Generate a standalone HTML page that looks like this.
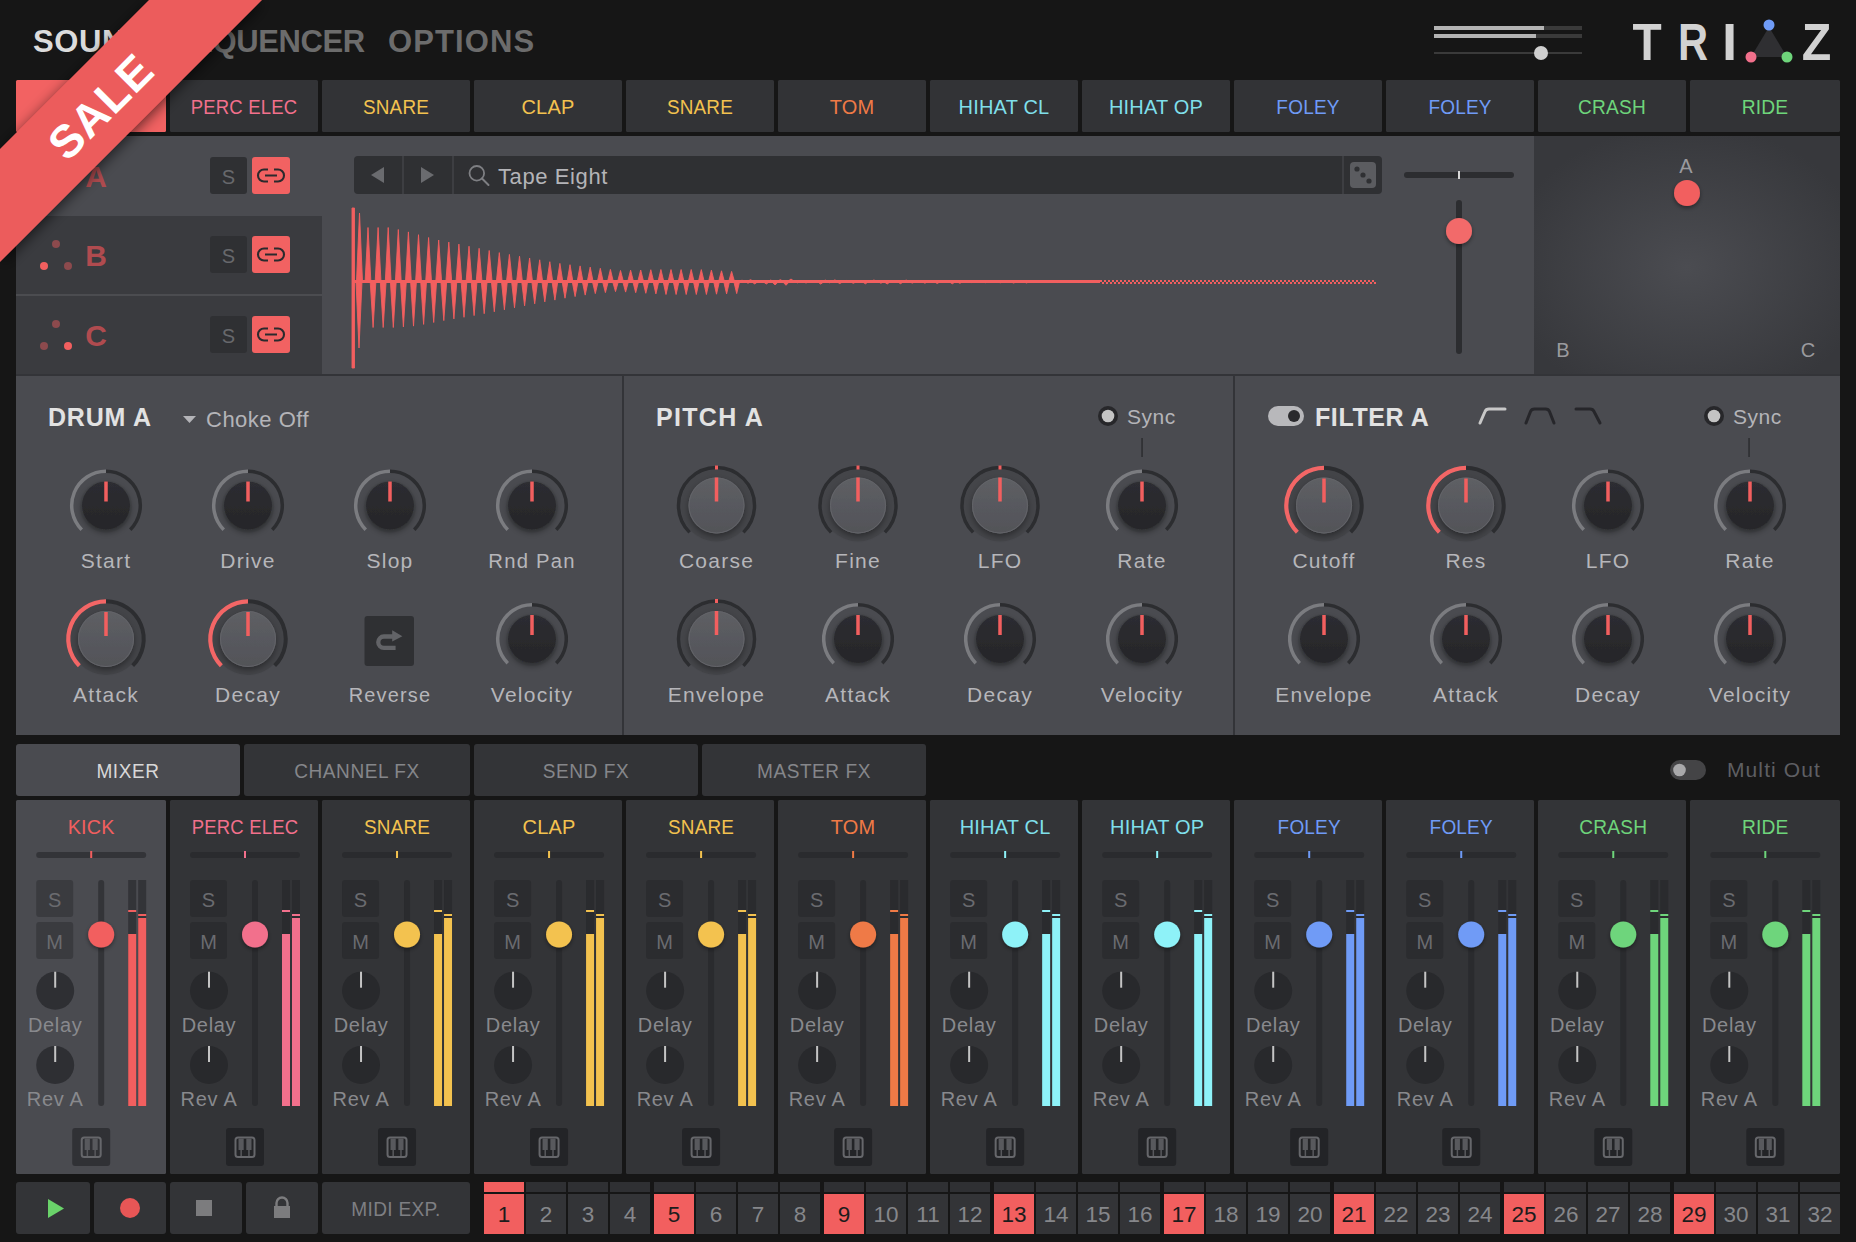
<!DOCTYPE html><html><head><meta charset="utf-8"><title>TRIAZ</title>
<style>html,body{margin:0;padding:0;background:#161616;width:1856px;height:1242px;overflow:hidden}
svg{display:block;font-family:"Liberation Sans", sans-serif}</style></head><body>
<svg width="1856" height="1242" viewBox="0 0 1856 1242">
<defs>
<filter id="sh" x="-50%" y="-50%" width="200%" height="200%"><feDropShadow dx="0" dy="3" stdDeviation="3" flood-color="#000" flood-opacity="0.38"/></filter>
<filter id="shs" x="-50%" y="-50%" width="200%" height="200%"><feDropShadow dx="0" dy="2" stdDeviation="2" flood-color="#000" flood-opacity="0.4"/></filter>
<filter id="rsh" x="-30%" y="-30%" width="160%" height="160%"><feDropShadow dx="2" dy="2" stdDeviation="7" flood-color="#000" flood-opacity="0.6"/></filter>
<radialGradient id="xyg" cx="50%" cy="55%" r="60%"><stop offset="0" stop-color="#4b4c51"/><stop offset="1" stop-color="#37383c"/></radialGradient>
<linearGradient id="knobl" x1="0" y1="0" x2="0" y2="1"><stop offset="0" stop-color="#5e5f64"/><stop offset="1" stop-color="#525358"/></linearGradient>
<linearGradient id="knobd" x1="0" y1="0" x2="0" y2="1"><stop offset="0" stop-color="#2d2d31"/><stop offset="1" stop-color="#262629"/></linearGradient>
<radialGradient id="well" cx="50%" cy="50%" r="50%"><stop offset="0.7" stop-color="#3c3d41" stop-opacity="1"/><stop offset="1" stop-color="#45464a" stop-opacity="0"/></radialGradient>
</defs>
<rect x="0" y="0" width="1856" height="1242" fill="#161616"/>

<text x="33" y="51.5" font-size="31" fill="#dcdcdc" font-weight="bold" text-anchor="start" letter-spacing="0.6" >SOUND</text>
<text x="172" y="51.5" font-size="31" fill="#6c6c6c" font-weight="bold" text-anchor="start" letter-spacing="-0.4" >SEQUENCER</text>
<text x="388" y="51.5" font-size="31" fill="#6c6c6c" font-weight="bold" text-anchor="start" letter-spacing="1.1" >OPTIONS</text>
<rect x="1434" y="26" width="148" height="4" rx="0" fill="#3a3a3a" />
<rect x="1434" y="26" width="110" height="4" rx="0" fill="#b4b4b4" />
<rect x="1434" y="34" width="148" height="4" rx="0" fill="#3a3a3a" />
<rect x="1434" y="34" width="102" height="4" rx="0" fill="#b4b4b4" />
<rect x="1434" y="52" width="148" height="2" rx="0" fill="#3a3a3a" />
<circle cx="1541" cy="53" r="7" fill="#cfcfcf" />
<g transform="translate(1647,0) scale(0.92,1) translate(-1647,0)">
<text x="1647" y="60" font-size="52" fill="#d2d2d2" font-weight="bold" text-anchor="middle" >T</text>
</g>
<g transform="translate(1678,0) scale(0.8,1) translate(-1678,0)">
<text x="1678" y="60" font-size="52" fill="#d2d2d2" font-weight="bold" text-anchor="start" >R</text>
</g>
<g transform="translate(1729.5,0) scale(1.05,1) translate(-1729.5,0)">
<text x="1729.5" y="60" font-size="52" fill="#d2d2d2" font-weight="bold" text-anchor="middle" >I</text>
</g>
<path d="M1769,27 L1751,57 L1787,57 Z" fill="#2f2f32"/>
<circle cx="1769" cy="25" r="5.5" fill="#6f9bf6" />
<circle cx="1751" cy="57" r="5.5" fill="#f2708c" />
<circle cx="1787" cy="57" r="5.5" fill="#6ed57b" />
<g transform="translate(1816.5,0) scale(0.93,1) translate(-1816.5,0)">
<text x="1816.5" y="60" font-size="52" fill="#d2d2d2" font-weight="bold" text-anchor="middle" >Z</text>
</g>
<rect x="16" y="80" width="150" height="52" rx="1.5" fill="#f26262" />
<rect x="170" y="80" width="148" height="52" rx="1.5" fill="#323336" />
<g transform="translate(244.0,0) scale(0.925,1) translate(-244.0,0)">
<text x="244.0" y="114.2" font-size="20" fill="#f2708c" font-weight="normal" text-anchor="middle" letter-spacing="0.2" >PERC ELEC</text>
</g>
<rect x="322" y="80" width="148" height="52" rx="1.5" fill="#323336" />
<g transform="translate(396.0,0) scale(0.945,1) translate(-396.0,0)">
<text x="396.0" y="114.2" font-size="20" fill="#f3c24f" font-weight="normal" text-anchor="middle" letter-spacing="0.2" >SNARE</text>
</g>
<rect x="474" y="80" width="148" height="52" rx="1.5" fill="#323336" />
<g transform="translate(548.0,0) scale(1,1) translate(-548.0,0)">
<text x="548.0" y="114.2" font-size="20" fill="#f3c24f" font-weight="normal" text-anchor="middle" letter-spacing="0.2" >CLAP</text>
</g>
<rect x="626" y="80" width="148" height="52" rx="1.5" fill="#323336" />
<g transform="translate(700.0,0) scale(0.945,1) translate(-700.0,0)">
<text x="700.0" y="114.2" font-size="20" fill="#f3c24f" font-weight="normal" text-anchor="middle" letter-spacing="0.2" >SNARE</text>
</g>
<rect x="778" y="80" width="148" height="52" rx="1.5" fill="#323336" />
<g transform="translate(852.0,0) scale(1,1) translate(-852.0,0)">
<text x="852.0" y="114.2" font-size="20" fill="#ef7a46" font-weight="normal" text-anchor="middle" letter-spacing="0.2" >TOM</text>
</g>
<rect x="930" y="80" width="148" height="52" rx="1.5" fill="#323336" />
<g transform="translate(1004.0,0) scale(1,1) translate(-1004.0,0)">
<text x="1004.0" y="114.2" font-size="20" fill="#7fdfea" font-weight="normal" text-anchor="middle" letter-spacing="0.2" >HIHAT CL</text>
</g>
<rect x="1082" y="80" width="148" height="52" rx="1.5" fill="#323336" />
<g transform="translate(1156.0,0) scale(1,1) translate(-1156.0,0)">
<text x="1156.0" y="114.2" font-size="20" fill="#7fdfea" font-weight="normal" text-anchor="middle" letter-spacing="0.2" >HIHAT OP</text>
</g>
<rect x="1234" y="80" width="148" height="52" rx="1.5" fill="#323336" />
<g transform="translate(1308.0,0) scale(0.95,1) translate(-1308.0,0)">
<text x="1308.0" y="114.2" font-size="20" fill="#6f9bf6" font-weight="normal" text-anchor="middle" letter-spacing="0.2" >FOLEY</text>
</g>
<rect x="1386" y="80" width="148" height="52" rx="1.5" fill="#323336" />
<g transform="translate(1460.0,0) scale(0.95,1) translate(-1460.0,0)">
<text x="1460.0" y="114.2" font-size="20" fill="#6f9bf6" font-weight="normal" text-anchor="middle" letter-spacing="0.2" >FOLEY</text>
</g>
<rect x="1538" y="80" width="148" height="52" rx="1.5" fill="#323336" />
<g transform="translate(1612.0,0) scale(0.955,1) translate(-1612.0,0)">
<text x="1612.0" y="114.2" font-size="20" fill="#6ed57b" font-weight="normal" text-anchor="middle" letter-spacing="0.2" >CRASH</text>
</g>
<rect x="1690" y="80" width="150" height="52" rx="1.5" fill="#323336" />
<g transform="translate(1765.0,0) scale(0.96,1) translate(-1765.0,0)">
<text x="1765.0" y="114.2" font-size="20" fill="#6ed57b" font-weight="normal" text-anchor="middle" letter-spacing="0.2" >RIDE</text>
</g>
<rect x="16" y="136" width="1824" height="239" rx="0" fill="#4a4b50" />
<rect x="16" y="216" width="306" height="78" rx="0" fill="#3a3b3f" />
<rect x="16" y="294" width="306" height="2" rx="0" fill="#4b4c50" />
<rect x="16" y="296" width="306" height="78" rx="0" fill="#3a3b3f" />
<text x="96" y="187" font-size="30" fill="#b04b4f" font-weight="bold" text-anchor="middle" >A</text>
<circle cx="56" cy="165" r="4" fill="#f25f5f" />
<circle cx="44" cy="187" r="4" fill="#8c4a4d" />
<circle cx="68" cy="187" r="4" fill="#8c4a4d" />
<rect x="210" y="157" width="37" height="37" rx="3" fill="#2f3033" />
<text x="228.5" y="183.5" font-size="20" fill="#67686c" font-weight="normal" text-anchor="middle" >S</text>
<rect x="252" y="157" width="38" height="37" rx="3" fill="#f26262" />
<path d="M268,169.5 h-4 a6,6 0 0 0 0,12 h4 M274,169.5 h4 a6,6 0 0 1 0,12 h-4 M265,175.5 h12" fill="none" stroke="#2a2a2d" stroke-width="2.1" stroke-linecap="butt"/>
<text x="96" y="266" font-size="30" fill="#b04b4f" font-weight="bold" text-anchor="middle" >B</text>
<circle cx="56" cy="244" r="4" fill="#8c4a4d" />
<circle cx="44" cy="266" r="4" fill="#f25f5f" />
<circle cx="68" cy="266" r="4" fill="#8c4a4d" />
<rect x="210" y="236" width="37" height="37" rx="3" fill="#2f3033" />
<text x="228.5" y="262.5" font-size="20" fill="#67686c" font-weight="normal" text-anchor="middle" >S</text>
<rect x="252" y="236" width="38" height="37" rx="3" fill="#f26262" />
<path d="M268,248.5 h-4 a6,6 0 0 0 0,12 h4 M274,248.5 h4 a6,6 0 0 1 0,12 h-4 M265,254.5 h12" fill="none" stroke="#2a2a2d" stroke-width="2.1" stroke-linecap="butt"/>
<text x="96" y="346" font-size="30" fill="#b04b4f" font-weight="bold" text-anchor="middle" >C</text>
<circle cx="56" cy="324" r="4" fill="#8c4a4d" />
<circle cx="44" cy="346" r="4" fill="#8c4a4d" />
<circle cx="68" cy="346" r="4" fill="#f25f5f" />
<rect x="210" y="316" width="37" height="37" rx="3" fill="#2f3033" />
<text x="228.5" y="342.5" font-size="20" fill="#67686c" font-weight="normal" text-anchor="middle" >S</text>
<rect x="252" y="316" width="38" height="37" rx="3" fill="#f26262" />
<path d="M268,328.5 h-4 a6,6 0 0 0 0,12 h4 M274,328.5 h4 a6,6 0 0 1 0,12 h-4 M265,334.5 h12" fill="none" stroke="#2a2a2d" stroke-width="2.1" stroke-linecap="butt"/>
<rect x="354" y="156" width="1028" height="38" rx="4" fill="#2f3033" />
<rect x="402" y="156" width="2" height="38" rx="0" fill="#3d3e42" />
<rect x="452" y="156" width="2" height="38" rx="0" fill="#3d3e42" />
<rect x="1342" y="156" width="2" height="38" rx="0" fill="#3d3e42" />
<path d="M371,175 L384,167 L384,183 Z" fill="#6a6b6f"/>
<path d="M434,175 L421,167 L421,183 Z" fill="#6a6b6f"/>
<circle cx="476.8" cy="173.3" r="7.3" fill="none" stroke="#7e7f83" stroke-width="1.8"/><path d="M482,178.5 L488.5,185" stroke="#7e7f83" stroke-width="2" stroke-linecap="round"/>
<text x="498" y="183.6" font-size="22" fill="#b4b4b8" font-weight="normal" text-anchor="start" letter-spacing="0.6" >Tape Eight</text>
<rect x="1350" y="162" width="26" height="26" rx="4" fill="#5b5c60" />
<circle cx="1357" cy="169" r="2.6" fill="#2f3033" />
<circle cx="1363" cy="175" r="2.6" fill="#2f3033" />
<circle cx="1369" cy="181" r="2.6" fill="#2f3033" />
<path d="M352,208 L352,368 L354.5,368 L354.5,208 Z M356.5,281.5 L359.5,213 L362.5,281.5 Z M356,281.5 L359,348 L362,281.5 Z M365.1,281.5 L368.0,227.5 L370.9,281.5 Z M370.2,281.5 L373.1,327.5 L375.9,281.5 Z M375.2,281.5 L378.1,227.5 L381.0,281.5 Z M380.3,281.5 L383.2,327.5 L386.1,281.5 Z M385.3,281.5 L388.2,227.5 L391.1,281.5 Z M390.4,281.5 L393.3,327.5 L396.2,281.5 Z M395.4,281.5 L398.3,229.5 L401.2,281.5 Z M400.5,281.5 L403.4,326.9 L406.3,281.5 Z M405.5,281.5 L408.4,231.9 L411.3,281.5 Z M410.6,281.5 L413.5,326.1 L416.4,281.5 Z M415.6,281.5 L418.5,234.7 L421.4,281.5 Z M420.7,281.5 L423.6,324.4 L426.5,281.5 Z M425.7,281.5 L428.6,237.5 L431.5,281.5 Z M430.8,281.5 L433.7,322.5 L436.6,281.5 Z M435.8,281.5 L438.7,240.0 L441.6,281.5 Z M440.9,281.5 L443.8,320.6 L446.7,281.5 Z M445.9,281.5 L448.8,242.1 L451.7,281.5 Z M451.0,281.5 L453.9,318.9 L456.8,281.5 Z M456.0,281.5 L458.9,244.1 L461.8,281.5 Z M461.1,281.5 L464.0,317.3 L466.9,281.5 Z M466.1,281.5 L469.0,246.2 L471.9,281.5 Z M471.2,281.5 L474.1,315.6 L477.0,281.5 Z M476.2,281.5 L479.1,248.3 L482.0,281.5 Z M481.3,281.5 L484.2,313.7 L487.1,281.5 Z M486.3,281.5 L489.2,250.5 L492.1,281.5 Z M491.4,281.5 L494.3,311.8 L497.2,281.5 Z M496.4,281.5 L499.3,252.6 L502.2,281.5 Z M501.5,281.5 L504.4,309.8 L507.3,281.5 Z M506.5,281.5 L509.4,254.4 L512.3,281.5 Z M511.6,281.5 L514.5,307.8 L517.4,281.5 Z M516.6,281.5 L519.5,256.2 L522.4,281.5 Z M521.7,281.5 L524.6,305.8 L527.5,281.5 Z M526.7,281.5 L529.6,258.0 L532.5,281.5 Z M531.8,281.5 L534.7,303.8 L537.6,281.5 Z M536.8,281.5 L539.7,259.8 L542.6,281.5 Z M541.9,281.5 L544.8,301.9 L547.7,281.5 Z M546.9,281.5 L549.8,261.7 L552.7,281.5 Z M552.0,281.5 L554.9,300.1 L557.8,281.5 Z M557.0,281.5 L559.9,263.4 L562.8,281.5 Z M562.1,281.5 L565.0,298.2 L567.9,281.5 Z M567.1,281.5 L570.0,264.7 L572.9,281.5 Z M572.2,281.5 L575.1,296.6 L578.0,281.5 Z M577.2,281.5 L580.1,265.9 L583.0,281.5 Z M582.3,281.5 L585.2,295.1 L588.1,281.5 Z M587.3,281.5 L590.2,267.1 L593.1,281.5 Z M592.4,281.5 L595.3,293.6 L598.2,281.5 Z M597.4,281.5 L600.3,268.3 L603.2,281.5 Z M602.5,281.5 L605.4,292.6 L608.3,281.5 Z M607.5,281.5 L610.4,269.4 L613.3,281.5 Z M612.6,281.5 L615.5,291.6 L618.4,281.5 Z M617.6,281.5 L620.5,270.5 L623.4,281.5 Z M622.7,281.5 L625.6,292.1 L628.5,281.5 Z M627.7,281.5 L630.6,270.2 L633.5,281.5 Z M632.8,281.5 L635.7,292.7 L638.6,281.5 Z M637.8,281.5 L640.7,270.0 L643.6,281.5 Z M642.9,281.5 L645.8,293.3 L648.7,281.5 Z M647.9,281.5 L650.8,269.7 L653.7,281.5 Z M653.0,281.5 L655.9,293.9 L658.8,281.5 Z M658.0,281.5 L660.9,269.5 L663.8,281.5 Z M663.1,281.5 L666.0,294.5 L668.9,281.5 Z M668.1,281.5 L671.0,269.5 L673.9,281.5 Z M673.2,281.5 L676.1,294.5 L679.0,281.5 Z M678.2,281.5 L681.1,269.5 L684.0,281.5 Z M683.3,281.5 L686.2,294.5 L689.1,281.5 Z M688.3,281.5 L691.2,269.5 L694.1,281.5 Z M693.4,281.5 L696.3,294.5 L699.2,281.5 Z M698.4,281.5 L701.3,269.6 L704.2,281.5 Z M703.5,281.5 L706.4,294.5 L709.3,281.5 Z M708.5,281.5 L711.4,270.2 L714.3,281.5 Z M713.6,281.5 L716.5,294.2 L719.4,281.5 Z M718.6,281.5 L721.5,270.8 L724.4,281.5 Z M723.7,281.5 L726.6,293.9 L729.5,281.5 Z M728.7,281.5 L731.6,271.4 L734.5,281.5 Z M733.8,281.5 L736.7,293.6 L739.6,281.5 Z M738.5,281.5 L742.0,280.2 L745.5,281.5 Z M744.5,281.5 L748.0,283.2 L751.5,281.5 Z M747.0,281.5 L750.5,279.7 L754.0,281.5 Z M751.2,281.5 L754.7,283.9 L758.2,281.5 Z M758.6,281.5 L762.1,280.9 L765.6,281.5 Z M762.8,281.5 L766.3,284.0 L769.8,281.5 Z M767.2,281.5 L770.7,280.1 L774.2,281.5 Z M771.6,281.5 L775.1,285.0 L778.6,281.5 Z M776.8,281.5 L780.3,279.7 L783.8,281.5 Z M782.5,281.5 L786.0,285.3 L789.5,281.5 Z M787.5,281.5 L791.0,279.0 L794.5,281.5 Z M794.1,281.5 L797.6,282.8 L801.1,281.5 Z M797.6,281.5 L801.1,280.8 L804.6,281.5 Z M802.5,281.5 L806.0,283.0 L809.5,281.5 Z M811.3,281.5 L814.8,280.7 L818.3,281.5 Z M817.2,281.5 L820.7,284.1 L824.2,281.5 Z M821.9,281.5 L825.4,280.1 L828.9,281.5 Z M826.1,281.5 L829.6,282.8 L833.1,281.5 Z M831.3,281.5 L834.8,279.9 L838.3,281.5 Z M836.3,281.5 L839.8,283.6 L843.3,281.5 Z M843.4,281.5 L846.9,280.4 L850.4,281.5 Z M849.8,281.5 L853.3,283.3 L856.8,281.5 Z M856.3,281.5 L859.8,280.8 L863.3,281.5 Z M861.9,281.5 L865.4,283.8 L868.9,281.5 Z M870.4,281.5 L873.9,280.0 L877.4,281.5 Z M877.4,281.5 L880.9,283.2 L884.4,281.5 Z M879.3,281.5 L882.8,280.6 L886.3,281.5 Z M883.7,281.5 L887.2,284.0 L890.7,281.5 Z M890.7,281.5 L894.2,281.2 L897.7,281.5 Z M897.0,281.5 L900.5,283.7 L904.0,281.5 Z M902.7,281.5 L906.2,280.1 L909.7,281.5 Z M908.8,281.5 L912.3,283.1 L915.8,281.5 Z M914.9,281.5 L918.4,280.5 L921.9,281.5 Z M921.4,281.5 L924.9,283.2 L928.4,281.5 Z M929.5,281.5 L933.0,280.7 L936.5,281.5 Z M933.7,281.5 L937.2,283.5 L940.7,281.5 Z M942.4,281.5 L945.9,280.6 L949.4,281.5 Z M948.8,281.5 L952.3,283.8 L955.8,281.5 Z M952.4,281.5 L955.9,280.9 L959.4,281.5 Z M956.4,281.5 L959.9,283.3 L963.4,281.5 Z M963.6,281.5 L967.1,281.2 L970.6,281.5 Z M967.8,281.5 L971.3,282.6 L974.8,281.5 Z M977.0,281.5 L980.5,281.2 L984.0,281.5 Z M982.2,281.5 L985.7,282.7 L989.2,281.5 Z M991.1,281.5 L994.6,281.3 L998.1,281.5 Z M996.7,281.5 L1000.2,282.8 L1003.7,281.5 Z M1005.3,281.5 L1008.8,280.9 L1012.3,281.5 Z M1010.1,281.5 L1013.6,283.1 L1017.1,281.5 Z M1016.2,281.5 L1019.7,281.2 L1023.2,281.5 Z M1023.0,281.5 L1026.5,283.0 L1030.0,281.5 Z M1025.2,281.5 L1028.7,281.3 L1032.2,281.5 Z M1029.9,281.5 L1033.4,282.5 L1036.9,281.5 Z M1036.6,281.5 L1040.1,281.2 L1043.6,281.5 Z M1040.6,281.5 L1044.1,282.5 L1047.6,281.5 Z M1047.6,281.5 L1051.1,281.3 L1054.6,281.5 Z M1054.4,281.5 L1057.9,282.6 L1061.4,281.5 Z M1060.4,281.5 L1063.9,281.3 L1067.4,281.5 Z M1066.4,281.5 L1069.9,282.5 L1073.4,281.5 Z M1068.8,281.5 L1072.3,281.3 L1075.8,281.5 Z M1075.4,281.5 L1078.9,282.5 L1082.4,281.5 Z M1082.4,281.5 L1085.9,281.4 L1089.4,281.5 Z M1086.7,281.5 L1090.2,282.4 L1093.7,281.5 Z " fill="#f25f5f" stroke="#f25f5f" stroke-width="0.9" stroke-linejoin="round"/>
<rect x="354" y="280" width="746" height="3" rx="0" fill="#f25f5f" />
<defs><pattern id="chk" x="0" y="280" width="4" height="4" patternUnits="userSpaceOnUse"><rect x="0" y="0" width="2" height="2" fill="#f25f5f"/><rect x="2" y="2" width="2" height="2" fill="#f25f5f"/></pattern></defs>
<rect x="1100" y="280" width="276" height="4" rx="0" fill="url(#chk)" />
<rect x="1404" y="172" width="110" height="6" rx="3" fill="#2c2d30" />
<rect x="1458" y="171" width="2" height="8" rx="0" fill="#d8d8d8" />
<rect x="1456" y="200" width="6" height="154" rx="3" fill="#2c2d30" />
<circle cx="1459" cy="231" r="13" fill="#f26b6b" filter="url(#shs)"/>
<rect x="1534" y="136" width="306" height="239" rx="0" fill="url(#xyg)" />
<text x="1686" y="173.3" font-size="20" fill="#9a9a9e" font-weight="normal" text-anchor="middle" >A</text>
<text x="1563" y="357.4" font-size="20" fill="#9a9a9e" font-weight="normal" text-anchor="middle" >B</text>
<text x="1808" y="357.4" font-size="20" fill="#9a9a9e" font-weight="normal" text-anchor="middle" >C</text>
<circle cx="1687" cy="193" r="13" fill="#f25f5f" filter="url(#shs)"/>
<rect x="16" y="374" width="1824" height="2" rx="0" fill="#333438" />
<rect x="16" y="376" width="1824" height="359" rx="0" fill="#4a4b50" />
<rect x="622" y="376" width="2" height="359" rx="0" fill="#333438" />
<rect x="1233" y="376" width="2" height="359" rx="0" fill="#333438" />
<text x="48" y="426" font-size="25" fill="#e2e2e2" font-weight="bold" text-anchor="start" letter-spacing="0.8" >DRUM A</text>
<path d="M183,416 L196,416 L189.5,423 Z" fill="#b4b4b8"/>
<text x="206" y="427" font-size="22" fill="#b4b4b8" font-weight="normal" text-anchor="start" letter-spacing="0.5" >Choke Off</text>
<text x="656" y="426" font-size="25" fill="#e2e2e2" font-weight="bold" text-anchor="start" letter-spacing="1.3" >PITCH A</text>
<text x="1315" y="426" font-size="25" fill="#e2e2e2" font-weight="bold" text-anchor="start" letter-spacing="0.6" >FILTER A</text>
<circle cx="1108" cy="416" r="10" fill="#27272a" />
<circle cx="1108" cy="416" r="6.3" fill="#c4c4c4" />
<text x="1127" y="424" font-size="21" fill="#b4b4b8" font-weight="normal" text-anchor="start" letter-spacing="0.5" >Sync</text>
<circle cx="1714" cy="416" r="10" fill="#27272a" />
<circle cx="1714" cy="416" r="6.3" fill="#c4c4c4" />
<text x="1733" y="424" font-size="21" fill="#b4b4b8" font-weight="normal" text-anchor="start" letter-spacing="0.5" >Sync</text>
<rect x="1141.3" y="438" width="1.5" height="19" rx="0" fill="#2c2d30" />
<rect x="1748.3" y="438" width="1.5" height="19" rx="0" fill="#2c2d30" />
<rect x="1268" y="406" width="36" height="20" rx="10" fill="#b8b8bb" />
<circle cx="1294" cy="416" r="6" fill="#2a2a2d" />
<path d="M1480,423 L1485,411.5 Q1486,409 1489,409 L1505,409" fill="none" stroke="#c8c8c8" stroke-width="3" stroke-linecap="round" stroke-linejoin="round"/>
<path d="M1526,423 L1530.5,411.5 Q1531.5,409 1534.5,409 L1545.5,409 Q1548.5,409 1549.5,411.5 L1554,423" fill="none" stroke="#26262a" stroke-width="3" stroke-linecap="round" stroke-linejoin="round"/>
<path d="M1576,409 L1590,409 Q1593,409 1594,411.5 L1600,423" fill="none" stroke="#26262a" stroke-width="3" stroke-linecap="round" stroke-linejoin="round"/>
<path d="M81.75,529.75 A34.3,34.3 0 0 1 106.00,471.20" fill="none" stroke="#7b7c80" stroke-width="3.5" stroke-linecap="butt"/>
<path d="M106.00,471.20 A34.3,34.3 0 0 1 130.25,529.75" fill="none" stroke="#2c2d30" stroke-width="3.5" stroke-linecap="butt"/>
<circle cx="106" cy="506.5" r="26" fill="#45464a" opacity="0.6"/>
<circle cx="106" cy="505.5" r="24" fill="url(#knobd)" filter="url(#sh)"/>
<rect x="104.25" y="481.5" width="3.5" height="20" rx="0" fill="#f25f5f" />
<text x="106" y="568.1" font-size="21" fill="#b6b6ba" font-weight="normal" text-anchor="middle" letter-spacing="1.25" >Start</text>
<path d="M223.75,529.75 A34.3,34.3 0 0 1 248.00,471.20" fill="none" stroke="#7b7c80" stroke-width="3.5" stroke-linecap="butt"/>
<path d="M248.00,471.20 A34.3,34.3 0 0 1 272.25,529.75" fill="none" stroke="#2c2d30" stroke-width="3.5" stroke-linecap="butt"/>
<circle cx="248" cy="506.5" r="26" fill="#45464a" opacity="0.6"/>
<circle cx="248" cy="505.5" r="24" fill="url(#knobd)" filter="url(#sh)"/>
<rect x="246.25" y="481.5" width="3.5" height="20" rx="0" fill="#f25f5f" />
<text x="248" y="568.1" font-size="21" fill="#b6b6ba" font-weight="normal" text-anchor="middle" letter-spacing="1.25" >Drive</text>
<path d="M365.75,529.75 A34.3,34.3 0 0 1 390.00,471.20" fill="none" stroke="#7b7c80" stroke-width="3.5" stroke-linecap="butt"/>
<path d="M390.00,471.20 A34.3,34.3 0 0 1 414.25,529.75" fill="none" stroke="#2c2d30" stroke-width="3.5" stroke-linecap="butt"/>
<circle cx="390" cy="506.5" r="26" fill="#45464a" opacity="0.6"/>
<circle cx="390" cy="505.5" r="24" fill="url(#knobd)" filter="url(#sh)"/>
<rect x="388.25" y="481.5" width="3.5" height="20" rx="0" fill="#f25f5f" />
<text x="390" y="568.1" font-size="21" fill="#b6b6ba" font-weight="normal" text-anchor="middle" letter-spacing="1.25" >Slop</text>
<path d="M507.75,529.75 A34.3,34.3 0 0 1 532.00,471.20" fill="none" stroke="#7b7c80" stroke-width="3.5" stroke-linecap="butt"/>
<path d="M532.00,471.20 A34.3,34.3 0 0 1 556.25,529.75" fill="none" stroke="#2c2d30" stroke-width="3.5" stroke-linecap="butt"/>
<circle cx="532" cy="506.5" r="26" fill="#45464a" opacity="0.6"/>
<circle cx="532" cy="505.5" r="24" fill="url(#knobd)" filter="url(#sh)"/>
<rect x="530.25" y="481.5" width="3.5" height="20" rx="0" fill="#f25f5f" />
<g transform="translate(532,0) scale(0.965,1) translate(-532,0)">
<text x="532" y="568.1" font-size="21" fill="#b6b6ba" font-weight="normal" text-anchor="middle" letter-spacing="1.25" >Rnd Pan</text>
</g>
<circle cx="106" cy="639" r="36" fill="#434448" />
<path d="M79.34,665.66 A37.7,37.7 0 0 1 106.00,601.30" fill="none" stroke="#f36666" stroke-width="4.2" stroke-linecap="butt"/>
<path d="M106.00,601.30 A37.7,37.7 0 0 1 132.66,665.66" fill="none" stroke="#2c2d30" stroke-width="4" stroke-linecap="butt"/>
<circle cx="106" cy="639" r="28" fill="url(#knobl)" filter="url(#sh)"/>
<circle cx="106" cy="639" r="27.5" fill="none" stroke="#636469" stroke-width="1"/>
<rect x="104.25" y="612" width="3.5" height="24" rx="0" fill="#f25f5f" />
<text x="106" y="701.6" font-size="21" fill="#b6b6ba" font-weight="normal" text-anchor="middle" letter-spacing="1.25" >Attack</text>
<circle cx="248" cy="639" r="36" fill="#434448" />
<path d="M221.34,665.66 A37.7,37.7 0 0 1 248.00,601.30" fill="none" stroke="#f36666" stroke-width="4.2" stroke-linecap="butt"/>
<path d="M248.00,601.30 A37.7,37.7 0 0 1 274.66,665.66" fill="none" stroke="#2c2d30" stroke-width="4" stroke-linecap="butt"/>
<circle cx="248" cy="639" r="28" fill="url(#knobl)" filter="url(#sh)"/>
<circle cx="248" cy="639" r="27.5" fill="none" stroke="#636469" stroke-width="1"/>
<rect x="246.25" y="612" width="3.5" height="24" rx="0" fill="#f25f5f" />
<text x="248" y="701.6" font-size="21" fill="#b6b6ba" font-weight="normal" text-anchor="middle" letter-spacing="1.25" >Decay</text>
<rect x="364.5" y="616" width="49.5" height="50" rx="3" fill="#2f3033" />
<path d="M393,636.5 H383.9 a5.65,5.65 0 0 0 0,11.3 H395.6" fill="none" stroke="#626367" stroke-width="4.3"/><path d="M392.2,630.2 L402.4,636.2 L392.2,641.6 Z" fill="#626367"/>
<g transform="translate(390,0) scale(0.95,1) translate(-390,0)">
<text x="390" y="701.6" font-size="21" fill="#b6b6ba" font-weight="normal" text-anchor="middle" letter-spacing="1.25" >Reverse</text>
</g>
<path d="M507.75,663.25 A34.3,34.3 0 0 1 532.00,604.70" fill="none" stroke="#7b7c80" stroke-width="3.5" stroke-linecap="butt"/>
<path d="M532.00,604.70 A34.3,34.3 0 0 1 556.25,663.25" fill="none" stroke="#2c2d30" stroke-width="3.5" stroke-linecap="butt"/>
<circle cx="532" cy="640" r="26" fill="#45464a" opacity="0.6"/>
<circle cx="532" cy="639" r="24" fill="url(#knobd)" filter="url(#sh)"/>
<rect x="530.25" y="615" width="3.5" height="20" rx="0" fill="#f25f5f" />
<text x="532" y="701.6" font-size="21" fill="#b6b6ba" font-weight="normal" text-anchor="middle" letter-spacing="1.25" >Velocity</text>
<circle cx="716.5" cy="505.5" r="36" fill="#444549" />
<path d="M689.63,532.37 A38,38 0 1 1 743.37,532.37" fill="none" stroke="#2c2d30" stroke-width="3.5" stroke-linecap="butt"/>
<rect x="715.0" y="465.5" width="3" height="4" rx="0" fill="#f25f5f" />
<circle cx="716.5" cy="505.5" r="28" fill="url(#knobl)" filter="url(#sh)"/>
<circle cx="716.5" cy="505.5" r="27.5" fill="none" stroke="#636469" stroke-width="1"/>
<rect x="714.75" y="477.5" width="3.5" height="24" rx="0" fill="#f25f5f" />
<text x="716.5" y="568.1" font-size="21" fill="#b6b6ba" font-weight="normal" text-anchor="middle" letter-spacing="1.25" >Coarse</text>
<circle cx="858" cy="505.5" r="36" fill="#444549" />
<path d="M831.13,532.37 A38,38 0 1 1 884.87,532.37" fill="none" stroke="#2c2d30" stroke-width="3.5" stroke-linecap="butt"/>
<rect x="856.5" y="465.5" width="3" height="4" rx="0" fill="#f25f5f" />
<circle cx="858" cy="505.5" r="28" fill="url(#knobl)" filter="url(#sh)"/>
<circle cx="858" cy="505.5" r="27.5" fill="none" stroke="#636469" stroke-width="1"/>
<rect x="856.25" y="477.5" width="3.5" height="24" rx="0" fill="#f25f5f" />
<text x="858" y="568.1" font-size="21" fill="#b6b6ba" font-weight="normal" text-anchor="middle" letter-spacing="1.25" >Fine</text>
<circle cx="1000" cy="505.5" r="36" fill="#444549" />
<path d="M973.13,532.37 A38,38 0 1 1 1026.87,532.37" fill="none" stroke="#2c2d30" stroke-width="3.5" stroke-linecap="butt"/>
<rect x="998.5" y="465.5" width="3" height="4" rx="0" fill="#f25f5f" />
<circle cx="1000" cy="505.5" r="28" fill="url(#knobl)" filter="url(#sh)"/>
<circle cx="1000" cy="505.5" r="27.5" fill="none" stroke="#636469" stroke-width="1"/>
<rect x="998.25" y="477.5" width="3.5" height="24" rx="0" fill="#f25f5f" />
<text x="1000" y="568.1" font-size="21" fill="#b6b6ba" font-weight="normal" text-anchor="middle" letter-spacing="1.25" >LFO</text>
<path d="M1117.75,529.75 A34.3,34.3 0 0 1 1142.00,471.20" fill="none" stroke="#7b7c80" stroke-width="3.5" stroke-linecap="butt"/>
<path d="M1142.00,471.20 A34.3,34.3 0 0 1 1166.25,529.75" fill="none" stroke="#2c2d30" stroke-width="3.5" stroke-linecap="butt"/>
<circle cx="1142" cy="506.5" r="26" fill="#45464a" opacity="0.6"/>
<circle cx="1142" cy="505.5" r="24" fill="url(#knobd)" filter="url(#sh)"/>
<rect x="1140.25" y="481.5" width="3.5" height="20" rx="0" fill="#f25f5f" />
<text x="1142" y="568.1" font-size="21" fill="#b6b6ba" font-weight="normal" text-anchor="middle" letter-spacing="1.25" >Rate</text>
<circle cx="716.5" cy="639" r="36" fill="#444549" />
<path d="M689.63,665.87 A38,38 0 1 1 743.37,665.87" fill="none" stroke="#2c2d30" stroke-width="3.5" stroke-linecap="butt"/>
<rect x="715.0" y="599" width="3" height="4" rx="0" fill="#f25f5f" />
<circle cx="716.5" cy="639" r="28" fill="url(#knobl)" filter="url(#sh)"/>
<circle cx="716.5" cy="639" r="27.5" fill="none" stroke="#636469" stroke-width="1"/>
<rect x="714.75" y="611" width="3.5" height="24" rx="0" fill="#f25f5f" />
<text x="716.5" y="701.6" font-size="21" fill="#b6b6ba" font-weight="normal" text-anchor="middle" letter-spacing="1.25" >Envelope</text>
<path d="M833.75,663.25 A34.3,34.3 0 0 1 858.00,604.70" fill="none" stroke="#7b7c80" stroke-width="3.5" stroke-linecap="butt"/>
<path d="M858.00,604.70 A34.3,34.3 0 0 1 882.25,663.25" fill="none" stroke="#2c2d30" stroke-width="3.5" stroke-linecap="butt"/>
<circle cx="858" cy="640" r="26" fill="#45464a" opacity="0.6"/>
<circle cx="858" cy="639" r="24" fill="url(#knobd)" filter="url(#sh)"/>
<rect x="856.25" y="615" width="3.5" height="20" rx="0" fill="#f25f5f" />
<text x="858" y="701.6" font-size="21" fill="#b6b6ba" font-weight="normal" text-anchor="middle" letter-spacing="1.25" >Attack</text>
<path d="M975.75,663.25 A34.3,34.3 0 0 1 1000.00,604.70" fill="none" stroke="#7b7c80" stroke-width="3.5" stroke-linecap="butt"/>
<path d="M1000.00,604.70 A34.3,34.3 0 0 1 1024.25,663.25" fill="none" stroke="#2c2d30" stroke-width="3.5" stroke-linecap="butt"/>
<circle cx="1000" cy="640" r="26" fill="#45464a" opacity="0.6"/>
<circle cx="1000" cy="639" r="24" fill="url(#knobd)" filter="url(#sh)"/>
<rect x="998.25" y="615" width="3.5" height="20" rx="0" fill="#f25f5f" />
<text x="1000" y="701.6" font-size="21" fill="#b6b6ba" font-weight="normal" text-anchor="middle" letter-spacing="1.25" >Decay</text>
<path d="M1117.75,663.25 A34.3,34.3 0 0 1 1142.00,604.70" fill="none" stroke="#7b7c80" stroke-width="3.5" stroke-linecap="butt"/>
<path d="M1142.00,604.70 A34.3,34.3 0 0 1 1166.25,663.25" fill="none" stroke="#2c2d30" stroke-width="3.5" stroke-linecap="butt"/>
<circle cx="1142" cy="640" r="26" fill="#45464a" opacity="0.6"/>
<circle cx="1142" cy="639" r="24" fill="url(#knobd)" filter="url(#sh)"/>
<rect x="1140.25" y="615" width="3.5" height="20" rx="0" fill="#f25f5f" />
<text x="1142" y="701.6" font-size="21" fill="#b6b6ba" font-weight="normal" text-anchor="middle" letter-spacing="1.25" >Velocity</text>
<circle cx="1324" cy="505.5" r="36" fill="#434448" />
<path d="M1297.34,532.16 A37.7,37.7 0 0 1 1324.00,467.80" fill="none" stroke="#f36666" stroke-width="4.2" stroke-linecap="butt"/>
<path d="M1324.00,467.80 A37.7,37.7 0 0 1 1350.66,532.16" fill="none" stroke="#2c2d30" stroke-width="4" stroke-linecap="butt"/>
<circle cx="1324" cy="505.5" r="28" fill="url(#knobl)" filter="url(#sh)"/>
<circle cx="1324" cy="505.5" r="27.5" fill="none" stroke="#636469" stroke-width="1"/>
<rect x="1322.25" y="478.5" width="3.5" height="24" rx="0" fill="#f25f5f" />
<text x="1324" y="568.1" font-size="21" fill="#b6b6ba" font-weight="normal" text-anchor="middle" letter-spacing="1.25" >Cutoff</text>
<circle cx="1466" cy="505.5" r="36" fill="#434448" />
<path d="M1439.34,532.16 A37.7,37.7 0 0 1 1466.00,467.80" fill="none" stroke="#f36666" stroke-width="4.2" stroke-linecap="butt"/>
<path d="M1466.00,467.80 A37.7,37.7 0 0 1 1492.66,532.16" fill="none" stroke="#2c2d30" stroke-width="4" stroke-linecap="butt"/>
<circle cx="1466" cy="505.5" r="28" fill="url(#knobl)" filter="url(#sh)"/>
<circle cx="1466" cy="505.5" r="27.5" fill="none" stroke="#636469" stroke-width="1"/>
<rect x="1464.25" y="478.5" width="3.5" height="24" rx="0" fill="#f25f5f" />
<text x="1466" y="568.1" font-size="21" fill="#b6b6ba" font-weight="normal" text-anchor="middle" letter-spacing="1.25" >Res</text>
<path d="M1583.75,529.75 A34.3,34.3 0 0 1 1608.00,471.20" fill="none" stroke="#7b7c80" stroke-width="3.5" stroke-linecap="butt"/>
<path d="M1608.00,471.20 A34.3,34.3 0 0 1 1632.25,529.75" fill="none" stroke="#2c2d30" stroke-width="3.5" stroke-linecap="butt"/>
<circle cx="1608" cy="506.5" r="26" fill="#45464a" opacity="0.6"/>
<circle cx="1608" cy="505.5" r="24" fill="url(#knobd)" filter="url(#sh)"/>
<rect x="1606.25" y="481.5" width="3.5" height="20" rx="0" fill="#f25f5f" />
<text x="1608" y="568.1" font-size="21" fill="#b6b6ba" font-weight="normal" text-anchor="middle" letter-spacing="1.25" >LFO</text>
<path d="M1725.75,529.75 A34.3,34.3 0 0 1 1750.00,471.20" fill="none" stroke="#7b7c80" stroke-width="3.5" stroke-linecap="butt"/>
<path d="M1750.00,471.20 A34.3,34.3 0 0 1 1774.25,529.75" fill="none" stroke="#2c2d30" stroke-width="3.5" stroke-linecap="butt"/>
<circle cx="1750" cy="506.5" r="26" fill="#45464a" opacity="0.6"/>
<circle cx="1750" cy="505.5" r="24" fill="url(#knobd)" filter="url(#sh)"/>
<rect x="1748.25" y="481.5" width="3.5" height="20" rx="0" fill="#f25f5f" />
<text x="1750" y="568.1" font-size="21" fill="#b6b6ba" font-weight="normal" text-anchor="middle" letter-spacing="1.25" >Rate</text>
<path d="M1299.75,663.25 A34.3,34.3 0 0 1 1324.00,604.70" fill="none" stroke="#7b7c80" stroke-width="3.5" stroke-linecap="butt"/>
<path d="M1324.00,604.70 A34.3,34.3 0 0 1 1348.25,663.25" fill="none" stroke="#2c2d30" stroke-width="3.5" stroke-linecap="butt"/>
<circle cx="1324" cy="640" r="26" fill="#45464a" opacity="0.6"/>
<circle cx="1324" cy="639" r="24" fill="url(#knobd)" filter="url(#sh)"/>
<rect x="1322.25" y="615" width="3.5" height="20" rx="0" fill="#f25f5f" />
<text x="1324" y="701.6" font-size="21" fill="#b6b6ba" font-weight="normal" text-anchor="middle" letter-spacing="1.25" >Envelope</text>
<path d="M1441.75,663.25 A34.3,34.3 0 0 1 1466.00,604.70" fill="none" stroke="#7b7c80" stroke-width="3.5" stroke-linecap="butt"/>
<path d="M1466.00,604.70 A34.3,34.3 0 0 1 1490.25,663.25" fill="none" stroke="#2c2d30" stroke-width="3.5" stroke-linecap="butt"/>
<circle cx="1466" cy="640" r="26" fill="#45464a" opacity="0.6"/>
<circle cx="1466" cy="639" r="24" fill="url(#knobd)" filter="url(#sh)"/>
<rect x="1464.25" y="615" width="3.5" height="20" rx="0" fill="#f25f5f" />
<text x="1466" y="701.6" font-size="21" fill="#b6b6ba" font-weight="normal" text-anchor="middle" letter-spacing="1.25" >Attack</text>
<path d="M1583.75,663.25 A34.3,34.3 0 0 1 1608.00,604.70" fill="none" stroke="#7b7c80" stroke-width="3.5" stroke-linecap="butt"/>
<path d="M1608.00,604.70 A34.3,34.3 0 0 1 1632.25,663.25" fill="none" stroke="#2c2d30" stroke-width="3.5" stroke-linecap="butt"/>
<circle cx="1608" cy="640" r="26" fill="#45464a" opacity="0.6"/>
<circle cx="1608" cy="639" r="24" fill="url(#knobd)" filter="url(#sh)"/>
<rect x="1606.25" y="615" width="3.5" height="20" rx="0" fill="#f25f5f" />
<text x="1608" y="701.6" font-size="21" fill="#b6b6ba" font-weight="normal" text-anchor="middle" letter-spacing="1.25" >Decay</text>
<path d="M1725.75,663.25 A34.3,34.3 0 0 1 1750.00,604.70" fill="none" stroke="#7b7c80" stroke-width="3.5" stroke-linecap="butt"/>
<path d="M1750.00,604.70 A34.3,34.3 0 0 1 1774.25,663.25" fill="none" stroke="#2c2d30" stroke-width="3.5" stroke-linecap="butt"/>
<circle cx="1750" cy="640" r="26" fill="#45464a" opacity="0.6"/>
<circle cx="1750" cy="639" r="24" fill="url(#knobd)" filter="url(#sh)"/>
<rect x="1748.25" y="615" width="3.5" height="20" rx="0" fill="#f25f5f" />
<text x="1750" y="701.6" font-size="21" fill="#b6b6ba" font-weight="normal" text-anchor="middle" letter-spacing="1.25" >Velocity</text>
<rect x="16" y="744" width="224" height="52" rx="3" fill="#4a4b50" />
<g transform="translate(128.0,0) scale(0.925,1) translate(-128.0,0)">
<text x="128.0" y="778.5" font-size="20.6" fill="#d8d8d8" font-weight="normal" text-anchor="middle" letter-spacing="0.6" >MIXER</text>
</g>
<rect x="244" y="744" width="226" height="52" rx="3" fill="#333437" />
<g transform="translate(357.0,0) scale(0.925,1) translate(-357.0,0)">
<text x="357.0" y="778.5" font-size="20.6" fill="#85868a" font-weight="normal" text-anchor="middle" letter-spacing="0.6" >CHANNEL FX</text>
</g>
<rect x="474" y="744" width="224" height="52" rx="3" fill="#333437" />
<g transform="translate(586.0,0) scale(0.925,1) translate(-586.0,0)">
<text x="586.0" y="778.5" font-size="20.6" fill="#85868a" font-weight="normal" text-anchor="middle" letter-spacing="0.6" >SEND FX</text>
</g>
<rect x="702" y="744" width="224" height="52" rx="3" fill="#333437" />
<g transform="translate(814.0,0) scale(0.925,1) translate(-814.0,0)">
<text x="814.0" y="778.5" font-size="20.6" fill="#85868a" font-weight="normal" text-anchor="middle" letter-spacing="0.6" >MASTER FX</text>
</g>
<rect x="1670" y="760" width="36" height="20" rx="10" fill="#444446" />
<circle cx="1679.5" cy="770" r="6.3" fill="#a8a8aa" />
<text x="1727" y="777" font-size="21" fill="#5e5f63" font-weight="normal" text-anchor="start" letter-spacing="1.1" >Multi Out</text>
<rect x="16" y="800" width="150" height="374" rx="1.5" fill="#4a4b50" />
<g transform="translate(91.2,0) scale(0.99,1) translate(-91.2,0)">
<text x="91.2" y="834.2" font-size="20" fill="#f25f5f" font-weight="normal" text-anchor="middle" letter-spacing="0.2" >KICK</text>
</g>
<rect x="36.2" y="852" width="110" height="6" rx="3" fill="#333438" />
<rect x="90.2" y="851" width="2" height="7" rx="0" fill="#f25f5f" />
<rect x="36.2" y="880" width="37" height="37" rx="3" fill="#3a3b3f" />
<rect x="36.2" y="922" width="37" height="37" rx="3" fill="#3a3b3f" />
<text x="54.7" y="906.5" font-size="20" fill="#6a6b6f" font-weight="normal" text-anchor="middle" >S</text>
<text x="54.7" y="948.5" font-size="20" fill="#6a6b6f" font-weight="normal" text-anchor="middle" >M</text>
<rect x="98.2" y="880" width="6" height="226" rx="3" fill="#333438" />
<circle cx="101.2" cy="934.5" r="13" fill="#f25f5f" filter="url(#shs)"/>
<rect x="128.2" y="880" width="8" height="226" rx="0" fill="#333438" />
<rect x="138.2" y="880" width="8" height="226" rx="0" fill="#333438" />
<rect x="128.2" y="910" width="8" height="2" rx="0" fill="#f25f5f" />
<rect x="128.2" y="934" width="8" height="172" rx="0" fill="#f25f5f" />
<rect x="138.2" y="914" width="8" height="2" rx="0" fill="#f25f5f" />
<rect x="138.2" y="918" width="8" height="188" rx="0" fill="#f25f5f" />
<circle cx="55.2" cy="990.7" r="19" fill="#2e2f33" />
<rect x="54.2" y="971.7" width="2" height="16" rx="0" fill="#c4c4c4" />
<text x="55.2" y="1032" font-size="20" fill="#88898d" font-weight="normal" text-anchor="middle" letter-spacing="0.7" >Delay</text>
<circle cx="55.2" cy="1065" r="19" fill="#2e2f33" />
<rect x="54.2" y="1046" width="2" height="16" rx="0" fill="#c4c4c4" />
<text x="55.2" y="1106" font-size="20" fill="#88898d" font-weight="normal" text-anchor="middle" letter-spacing="0.7" >Rev A</text>
<rect x="72.2" y="1128" width="38" height="38" rx="3" fill="#303135" />
<rect x="81.7" y="1137.5" width="19" height="19.5" rx="2.5" fill="none" stroke="#66676b" stroke-width="2"/>
<rect x="84.7" y="1138.5" width="5.2" height="11.5" rx="0" fill="#58595d" />
<rect x="92.5" y="1138.5" width="5.2" height="11.5" rx="0" fill="#58595d" />
<rect x="86.60000000000001" y="1150.0" width="1.5" height="6" rx="0" fill="#58595d" />
<rect x="94.4" y="1150.0" width="1.5" height="6" rx="0" fill="#58595d" />
<rect x="170" y="800" width="148" height="374" rx="1.5" fill="#333437" />
<g transform="translate(245.0,0) scale(0.925,1) translate(-245.0,0)">
<text x="245.0" y="834.2" font-size="20" fill="#f2708c" font-weight="normal" text-anchor="middle" letter-spacing="0.2" >PERC ELEC</text>
</g>
<rect x="190.0" y="852" width="110" height="6" rx="3" fill="#2a2b2e" />
<rect x="244.0" y="851" width="2" height="7" rx="0" fill="#f2708c" />
<rect x="190.0" y="880" width="37" height="37" rx="3" fill="#2b2c2f" />
<rect x="190.0" y="922" width="37" height="37" rx="3" fill="#2b2c2f" />
<text x="208.5" y="906.5" font-size="20" fill="#6a6b6f" font-weight="normal" text-anchor="middle" >S</text>
<text x="208.5" y="948.5" font-size="20" fill="#6a6b6f" font-weight="normal" text-anchor="middle" >M</text>
<rect x="252.0" y="880" width="6" height="226" rx="3" fill="#2a2b2e" />
<circle cx="255.0" cy="934.5" r="13" fill="#f2708c" filter="url(#shs)"/>
<rect x="282.0" y="880" width="8" height="226" rx="0" fill="#2a2b2e" />
<rect x="292.0" y="880" width="8" height="226" rx="0" fill="#2a2b2e" />
<rect x="282.0" y="910" width="8" height="2" rx="0" fill="#f2708c" />
<rect x="282.0" y="934" width="8" height="172" rx="0" fill="#f2708c" />
<rect x="292.0" y="914" width="8" height="2" rx="0" fill="#f2708c" />
<rect x="292.0" y="918" width="8" height="188" rx="0" fill="#f2708c" />
<circle cx="209.0" cy="990.7" r="19" fill="#28292c" />
<rect x="208.0" y="971.7" width="2" height="16" rx="0" fill="#c4c4c4" />
<text x="209.0" y="1032" font-size="20" fill="#88898d" font-weight="normal" text-anchor="middle" letter-spacing="0.7" >Delay</text>
<circle cx="209.0" cy="1065" r="19" fill="#28292c" />
<rect x="208.0" y="1046" width="2" height="16" rx="0" fill="#c4c4c4" />
<text x="209.0" y="1106" font-size="20" fill="#88898d" font-weight="normal" text-anchor="middle" letter-spacing="0.7" >Rev A</text>
<rect x="226.0" y="1128" width="38" height="38" rx="3" fill="#232427" />
<rect x="235.5" y="1137.5" width="19" height="19.5" rx="2.5" fill="none" stroke="#66676b" stroke-width="2"/>
<rect x="238.5" y="1138.5" width="5.2" height="11.5" rx="0" fill="#58595d" />
<rect x="246.3" y="1138.5" width="5.2" height="11.5" rx="0" fill="#58595d" />
<rect x="240.4" y="1150.0" width="1.5" height="6" rx="0" fill="#58595d" />
<rect x="248.2" y="1150.0" width="1.5" height="6" rx="0" fill="#58595d" />
<rect x="322" y="800" width="148" height="374" rx="1.5" fill="#333437" />
<g transform="translate(397.03,0) scale(0.945,1) translate(-397.03,0)">
<text x="397.03" y="834.2" font-size="20" fill="#f3c24f" font-weight="normal" text-anchor="middle" letter-spacing="0.2" >SNARE</text>
</g>
<rect x="342.03" y="852" width="110" height="6" rx="3" fill="#2a2b2e" />
<rect x="396.03" y="851" width="2" height="7" rx="0" fill="#f3c24f" />
<rect x="342.03" y="880" width="37" height="37" rx="3" fill="#2b2c2f" />
<rect x="342.03" y="922" width="37" height="37" rx="3" fill="#2b2c2f" />
<text x="360.53" y="906.5" font-size="20" fill="#6a6b6f" font-weight="normal" text-anchor="middle" >S</text>
<text x="360.53" y="948.5" font-size="20" fill="#6a6b6f" font-weight="normal" text-anchor="middle" >M</text>
<rect x="404.03" y="880" width="6" height="226" rx="3" fill="#2a2b2e" />
<circle cx="407.03" cy="934.5" r="13" fill="#f3c24f" filter="url(#shs)"/>
<rect x="434.03" y="880" width="8" height="226" rx="0" fill="#2a2b2e" />
<rect x="444.03" y="880" width="8" height="226" rx="0" fill="#2a2b2e" />
<rect x="434.03" y="910" width="8" height="2" rx="0" fill="#f3c24f" />
<rect x="434.03" y="934" width="8" height="172" rx="0" fill="#f3c24f" />
<rect x="444.03" y="914" width="8" height="2" rx="0" fill="#f3c24f" />
<rect x="444.03" y="918" width="8" height="188" rx="0" fill="#f3c24f" />
<circle cx="361.03" cy="990.7" r="19" fill="#28292c" />
<rect x="360.03" y="971.7" width="2" height="16" rx="0" fill="#c4c4c4" />
<text x="361.03" y="1032" font-size="20" fill="#88898d" font-weight="normal" text-anchor="middle" letter-spacing="0.7" >Delay</text>
<circle cx="361.03" cy="1065" r="19" fill="#28292c" />
<rect x="360.03" y="1046" width="2" height="16" rx="0" fill="#c4c4c4" />
<text x="361.03" y="1106" font-size="20" fill="#88898d" font-weight="normal" text-anchor="middle" letter-spacing="0.7" >Rev A</text>
<rect x="378.03" y="1128" width="38" height="38" rx="3" fill="#232427" />
<rect x="387.53" y="1137.5" width="19" height="19.5" rx="2.5" fill="none" stroke="#66676b" stroke-width="2"/>
<rect x="390.53" y="1138.5" width="5.2" height="11.5" rx="0" fill="#58595d" />
<rect x="398.33" y="1138.5" width="5.2" height="11.5" rx="0" fill="#58595d" />
<rect x="392.42999999999995" y="1150.0" width="1.5" height="6" rx="0" fill="#58595d" />
<rect x="400.22999999999996" y="1150.0" width="1.5" height="6" rx="0" fill="#58595d" />
<rect x="474" y="800" width="148" height="374" rx="1.5" fill="#333437" />
<g transform="translate(549.06,0) scale(1,1) translate(-549.06,0)">
<text x="549.06" y="834.2" font-size="20" fill="#f3c24f" font-weight="normal" text-anchor="middle" letter-spacing="0.2" >CLAP</text>
</g>
<rect x="494.05999999999995" y="852" width="110" height="6" rx="3" fill="#2a2b2e" />
<rect x="548.06" y="851" width="2" height="7" rx="0" fill="#f3c24f" />
<rect x="494.05999999999995" y="880" width="37" height="37" rx="3" fill="#2b2c2f" />
<rect x="494.05999999999995" y="922" width="37" height="37" rx="3" fill="#2b2c2f" />
<text x="512.56" y="906.5" font-size="20" fill="#6a6b6f" font-weight="normal" text-anchor="middle" >S</text>
<text x="512.56" y="948.5" font-size="20" fill="#6a6b6f" font-weight="normal" text-anchor="middle" >M</text>
<rect x="556.06" y="880" width="6" height="226" rx="3" fill="#2a2b2e" />
<circle cx="559.06" cy="934.5" r="13" fill="#f3c24f" filter="url(#shs)"/>
<rect x="586.06" y="880" width="8" height="226" rx="0" fill="#2a2b2e" />
<rect x="596.06" y="880" width="8" height="226" rx="0" fill="#2a2b2e" />
<rect x="586.06" y="910" width="8" height="2" rx="0" fill="#f3c24f" />
<rect x="586.06" y="934" width="8" height="172" rx="0" fill="#f3c24f" />
<rect x="596.06" y="914" width="8" height="2" rx="0" fill="#f3c24f" />
<rect x="596.06" y="918" width="8" height="188" rx="0" fill="#f3c24f" />
<circle cx="513.06" cy="990.7" r="19" fill="#28292c" />
<rect x="512.06" y="971.7" width="2" height="16" rx="0" fill="#c4c4c4" />
<text x="513.06" y="1032" font-size="20" fill="#88898d" font-weight="normal" text-anchor="middle" letter-spacing="0.7" >Delay</text>
<circle cx="513.06" cy="1065" r="19" fill="#28292c" />
<rect x="512.06" y="1046" width="2" height="16" rx="0" fill="#c4c4c4" />
<text x="513.06" y="1106" font-size="20" fill="#88898d" font-weight="normal" text-anchor="middle" letter-spacing="0.7" >Rev A</text>
<rect x="530.06" y="1128" width="38" height="38" rx="3" fill="#232427" />
<rect x="539.56" y="1137.5" width="19" height="19.5" rx="2.5" fill="none" stroke="#66676b" stroke-width="2"/>
<rect x="542.56" y="1138.5" width="5.2" height="11.5" rx="0" fill="#58595d" />
<rect x="550.3599999999999" y="1138.5" width="5.2" height="11.5" rx="0" fill="#58595d" />
<rect x="544.4599999999999" y="1150.0" width="1.5" height="6" rx="0" fill="#58595d" />
<rect x="552.26" y="1150.0" width="1.5" height="6" rx="0" fill="#58595d" />
<rect x="626" y="800" width="148" height="374" rx="1.5" fill="#333437" />
<g transform="translate(701.09,0) scale(0.945,1) translate(-701.09,0)">
<text x="701.09" y="834.2" font-size="20" fill="#f3c24f" font-weight="normal" text-anchor="middle" letter-spacing="0.2" >SNARE</text>
</g>
<rect x="646.09" y="852" width="110" height="6" rx="3" fill="#2a2b2e" />
<rect x="700.09" y="851" width="2" height="7" rx="0" fill="#f3c24f" />
<rect x="646.09" y="880" width="37" height="37" rx="3" fill="#2b2c2f" />
<rect x="646.09" y="922" width="37" height="37" rx="3" fill="#2b2c2f" />
<text x="664.59" y="906.5" font-size="20" fill="#6a6b6f" font-weight="normal" text-anchor="middle" >S</text>
<text x="664.59" y="948.5" font-size="20" fill="#6a6b6f" font-weight="normal" text-anchor="middle" >M</text>
<rect x="708.09" y="880" width="6" height="226" rx="3" fill="#2a2b2e" />
<circle cx="711.09" cy="934.5" r="13" fill="#f3c24f" filter="url(#shs)"/>
<rect x="738.09" y="880" width="8" height="226" rx="0" fill="#2a2b2e" />
<rect x="748.09" y="880" width="8" height="226" rx="0" fill="#2a2b2e" />
<rect x="738.09" y="910" width="8" height="2" rx="0" fill="#f3c24f" />
<rect x="738.09" y="934" width="8" height="172" rx="0" fill="#f3c24f" />
<rect x="748.09" y="914" width="8" height="2" rx="0" fill="#f3c24f" />
<rect x="748.09" y="918" width="8" height="188" rx="0" fill="#f3c24f" />
<circle cx="665.09" cy="990.7" r="19" fill="#28292c" />
<rect x="664.09" y="971.7" width="2" height="16" rx="0" fill="#c4c4c4" />
<text x="665.09" y="1032" font-size="20" fill="#88898d" font-weight="normal" text-anchor="middle" letter-spacing="0.7" >Delay</text>
<circle cx="665.09" cy="1065" r="19" fill="#28292c" />
<rect x="664.09" y="1046" width="2" height="16" rx="0" fill="#c4c4c4" />
<text x="665.09" y="1106" font-size="20" fill="#88898d" font-weight="normal" text-anchor="middle" letter-spacing="0.7" >Rev A</text>
<rect x="682.09" y="1128" width="38" height="38" rx="3" fill="#232427" />
<rect x="691.59" y="1137.5" width="19" height="19.5" rx="2.5" fill="none" stroke="#66676b" stroke-width="2"/>
<rect x="694.59" y="1138.5" width="5.2" height="11.5" rx="0" fill="#58595d" />
<rect x="702.39" y="1138.5" width="5.2" height="11.5" rx="0" fill="#58595d" />
<rect x="696.49" y="1150.0" width="1.5" height="6" rx="0" fill="#58595d" />
<rect x="704.2900000000001" y="1150.0" width="1.5" height="6" rx="0" fill="#58595d" />
<rect x="778" y="800" width="148" height="374" rx="1.5" fill="#333437" />
<g transform="translate(853.12,0) scale(1,1) translate(-853.12,0)">
<text x="853.12" y="834.2" font-size="20" fill="#ef7a46" font-weight="normal" text-anchor="middle" letter-spacing="0.2" >TOM</text>
</g>
<rect x="798.12" y="852" width="110" height="6" rx="3" fill="#2a2b2e" />
<rect x="852.12" y="851" width="2" height="7" rx="0" fill="#ef7a46" />
<rect x="798.12" y="880" width="37" height="37" rx="3" fill="#2b2c2f" />
<rect x="798.12" y="922" width="37" height="37" rx="3" fill="#2b2c2f" />
<text x="816.62" y="906.5" font-size="20" fill="#6a6b6f" font-weight="normal" text-anchor="middle" >S</text>
<text x="816.62" y="948.5" font-size="20" fill="#6a6b6f" font-weight="normal" text-anchor="middle" >M</text>
<rect x="860.12" y="880" width="6" height="226" rx="3" fill="#2a2b2e" />
<circle cx="863.12" cy="934.5" r="13" fill="#ef7a46" filter="url(#shs)"/>
<rect x="890.12" y="880" width="8" height="226" rx="0" fill="#2a2b2e" />
<rect x="900.12" y="880" width="8" height="226" rx="0" fill="#2a2b2e" />
<rect x="890.12" y="910" width="8" height="2" rx="0" fill="#ef7a46" />
<rect x="890.12" y="934" width="8" height="172" rx="0" fill="#ef7a46" />
<rect x="900.12" y="914" width="8" height="2" rx="0" fill="#ef7a46" />
<rect x="900.12" y="918" width="8" height="188" rx="0" fill="#ef7a46" />
<circle cx="817.12" cy="990.7" r="19" fill="#28292c" />
<rect x="816.12" y="971.7" width="2" height="16" rx="0" fill="#c4c4c4" />
<text x="817.12" y="1032" font-size="20" fill="#88898d" font-weight="normal" text-anchor="middle" letter-spacing="0.7" >Delay</text>
<circle cx="817.12" cy="1065" r="19" fill="#28292c" />
<rect x="816.12" y="1046" width="2" height="16" rx="0" fill="#c4c4c4" />
<text x="817.12" y="1106" font-size="20" fill="#88898d" font-weight="normal" text-anchor="middle" letter-spacing="0.7" >Rev A</text>
<rect x="834.12" y="1128" width="38" height="38" rx="3" fill="#232427" />
<rect x="843.62" y="1137.5" width="19" height="19.5" rx="2.5" fill="none" stroke="#66676b" stroke-width="2"/>
<rect x="846.62" y="1138.5" width="5.2" height="11.5" rx="0" fill="#58595d" />
<rect x="854.42" y="1138.5" width="5.2" height="11.5" rx="0" fill="#58595d" />
<rect x="848.52" y="1150.0" width="1.5" height="6" rx="0" fill="#58595d" />
<rect x="856.32" y="1150.0" width="1.5" height="6" rx="0" fill="#58595d" />
<rect x="930" y="800" width="148" height="374" rx="1.5" fill="#333437" />
<g transform="translate(1005.15,0) scale(1,1) translate(-1005.15,0)">
<text x="1005.15" y="834.2" font-size="20" fill="#7fdfea" font-weight="normal" text-anchor="middle" letter-spacing="0.2" >HIHAT CL</text>
</g>
<rect x="950.15" y="852" width="110" height="6" rx="3" fill="#2a2b2e" />
<rect x="1004.15" y="851" width="2" height="7" rx="0" fill="#8ef2f8" />
<rect x="950.15" y="880" width="37" height="37" rx="3" fill="#2b2c2f" />
<rect x="950.15" y="922" width="37" height="37" rx="3" fill="#2b2c2f" />
<text x="968.65" y="906.5" font-size="20" fill="#6a6b6f" font-weight="normal" text-anchor="middle" >S</text>
<text x="968.65" y="948.5" font-size="20" fill="#6a6b6f" font-weight="normal" text-anchor="middle" >M</text>
<rect x="1012.15" y="880" width="6" height="226" rx="3" fill="#2a2b2e" />
<circle cx="1015.15" cy="934.5" r="13" fill="#8ef2f8" filter="url(#shs)"/>
<rect x="1042.15" y="880" width="8" height="226" rx="0" fill="#2a2b2e" />
<rect x="1052.15" y="880" width="8" height="226" rx="0" fill="#2a2b2e" />
<rect x="1042.15" y="910" width="8" height="2" rx="0" fill="#8ef2f8" />
<rect x="1042.15" y="934" width="8" height="172" rx="0" fill="#8ef2f8" />
<rect x="1052.15" y="914" width="8" height="2" rx="0" fill="#8ef2f8" />
<rect x="1052.15" y="918" width="8" height="188" rx="0" fill="#8ef2f8" />
<circle cx="969.15" cy="990.7" r="19" fill="#28292c" />
<rect x="968.15" y="971.7" width="2" height="16" rx="0" fill="#c4c4c4" />
<text x="969.15" y="1032" font-size="20" fill="#88898d" font-weight="normal" text-anchor="middle" letter-spacing="0.7" >Delay</text>
<circle cx="969.15" cy="1065" r="19" fill="#28292c" />
<rect x="968.15" y="1046" width="2" height="16" rx="0" fill="#c4c4c4" />
<text x="969.15" y="1106" font-size="20" fill="#88898d" font-weight="normal" text-anchor="middle" letter-spacing="0.7" >Rev A</text>
<rect x="986.15" y="1128" width="38" height="38" rx="3" fill="#232427" />
<rect x="995.65" y="1137.5" width="19" height="19.5" rx="2.5" fill="none" stroke="#66676b" stroke-width="2"/>
<rect x="998.65" y="1138.5" width="5.2" height="11.5" rx="0" fill="#58595d" />
<rect x="1006.4499999999999" y="1138.5" width="5.2" height="11.5" rx="0" fill="#58595d" />
<rect x="1000.55" y="1150.0" width="1.5" height="6" rx="0" fill="#58595d" />
<rect x="1008.35" y="1150.0" width="1.5" height="6" rx="0" fill="#58595d" />
<rect x="1082" y="800" width="148" height="374" rx="1.5" fill="#333437" />
<g transform="translate(1157.18,0) scale(1,1) translate(-1157.18,0)">
<text x="1157.18" y="834.2" font-size="20" fill="#7fdfea" font-weight="normal" text-anchor="middle" letter-spacing="0.2" >HIHAT OP</text>
</g>
<rect x="1102.18" y="852" width="110" height="6" rx="3" fill="#2a2b2e" />
<rect x="1156.18" y="851" width="2" height="7" rx="0" fill="#8ef2f8" />
<rect x="1102.18" y="880" width="37" height="37" rx="3" fill="#2b2c2f" />
<rect x="1102.18" y="922" width="37" height="37" rx="3" fill="#2b2c2f" />
<text x="1120.68" y="906.5" font-size="20" fill="#6a6b6f" font-weight="normal" text-anchor="middle" >S</text>
<text x="1120.68" y="948.5" font-size="20" fill="#6a6b6f" font-weight="normal" text-anchor="middle" >M</text>
<rect x="1164.18" y="880" width="6" height="226" rx="3" fill="#2a2b2e" />
<circle cx="1167.18" cy="934.5" r="13" fill="#8ef2f8" filter="url(#shs)"/>
<rect x="1194.18" y="880" width="8" height="226" rx="0" fill="#2a2b2e" />
<rect x="1204.18" y="880" width="8" height="226" rx="0" fill="#2a2b2e" />
<rect x="1194.18" y="910" width="8" height="2" rx="0" fill="#8ef2f8" />
<rect x="1194.18" y="934" width="8" height="172" rx="0" fill="#8ef2f8" />
<rect x="1204.18" y="914" width="8" height="2" rx="0" fill="#8ef2f8" />
<rect x="1204.18" y="918" width="8" height="188" rx="0" fill="#8ef2f8" />
<circle cx="1121.18" cy="990.7" r="19" fill="#28292c" />
<rect x="1120.18" y="971.7" width="2" height="16" rx="0" fill="#c4c4c4" />
<text x="1121.18" y="1032" font-size="20" fill="#88898d" font-weight="normal" text-anchor="middle" letter-spacing="0.7" >Delay</text>
<circle cx="1121.18" cy="1065" r="19" fill="#28292c" />
<rect x="1120.18" y="1046" width="2" height="16" rx="0" fill="#c4c4c4" />
<text x="1121.18" y="1106" font-size="20" fill="#88898d" font-weight="normal" text-anchor="middle" letter-spacing="0.7" >Rev A</text>
<rect x="1138.18" y="1128" width="38" height="38" rx="3" fill="#232427" />
<rect x="1147.68" y="1137.5" width="19" height="19.5" rx="2.5" fill="none" stroke="#66676b" stroke-width="2"/>
<rect x="1150.68" y="1138.5" width="5.2" height="11.5" rx="0" fill="#58595d" />
<rect x="1158.48" y="1138.5" width="5.2" height="11.5" rx="0" fill="#58595d" />
<rect x="1152.5800000000002" y="1150.0" width="1.5" height="6" rx="0" fill="#58595d" />
<rect x="1160.38" y="1150.0" width="1.5" height="6" rx="0" fill="#58595d" />
<rect x="1234" y="800" width="148" height="374" rx="1.5" fill="#333437" />
<g transform="translate(1309.21,0) scale(0.95,1) translate(-1309.21,0)">
<text x="1309.21" y="834.2" font-size="20" fill="#6f9bf6" font-weight="normal" text-anchor="middle" letter-spacing="0.2" >FOLEY</text>
</g>
<rect x="1254.21" y="852" width="110" height="6" rx="3" fill="#2a2b2e" />
<rect x="1308.21" y="851" width="2" height="7" rx="0" fill="#6f9bf6" />
<rect x="1254.21" y="880" width="37" height="37" rx="3" fill="#2b2c2f" />
<rect x="1254.21" y="922" width="37" height="37" rx="3" fill="#2b2c2f" />
<text x="1272.71" y="906.5" font-size="20" fill="#6a6b6f" font-weight="normal" text-anchor="middle" >S</text>
<text x="1272.71" y="948.5" font-size="20" fill="#6a6b6f" font-weight="normal" text-anchor="middle" >M</text>
<rect x="1316.21" y="880" width="6" height="226" rx="3" fill="#2a2b2e" />
<circle cx="1319.21" cy="934.5" r="13" fill="#6f9bf6" filter="url(#shs)"/>
<rect x="1346.21" y="880" width="8" height="226" rx="0" fill="#2a2b2e" />
<rect x="1356.21" y="880" width="8" height="226" rx="0" fill="#2a2b2e" />
<rect x="1346.21" y="910" width="8" height="2" rx="0" fill="#6f9bf6" />
<rect x="1346.21" y="934" width="8" height="172" rx="0" fill="#6f9bf6" />
<rect x="1356.21" y="914" width="8" height="2" rx="0" fill="#6f9bf6" />
<rect x="1356.21" y="918" width="8" height="188" rx="0" fill="#6f9bf6" />
<circle cx="1273.21" cy="990.7" r="19" fill="#28292c" />
<rect x="1272.21" y="971.7" width="2" height="16" rx="0" fill="#c4c4c4" />
<text x="1273.21" y="1032" font-size="20" fill="#88898d" font-weight="normal" text-anchor="middle" letter-spacing="0.7" >Delay</text>
<circle cx="1273.21" cy="1065" r="19" fill="#28292c" />
<rect x="1272.21" y="1046" width="2" height="16" rx="0" fill="#c4c4c4" />
<text x="1273.21" y="1106" font-size="20" fill="#88898d" font-weight="normal" text-anchor="middle" letter-spacing="0.7" >Rev A</text>
<rect x="1290.21" y="1128" width="38" height="38" rx="3" fill="#232427" />
<rect x="1299.71" y="1137.5" width="19" height="19.5" rx="2.5" fill="none" stroke="#66676b" stroke-width="2"/>
<rect x="1302.71" y="1138.5" width="5.2" height="11.5" rx="0" fill="#58595d" />
<rect x="1310.51" y="1138.5" width="5.2" height="11.5" rx="0" fill="#58595d" />
<rect x="1304.6100000000001" y="1150.0" width="1.5" height="6" rx="0" fill="#58595d" />
<rect x="1312.41" y="1150.0" width="1.5" height="6" rx="0" fill="#58595d" />
<rect x="1386" y="800" width="148" height="374" rx="1.5" fill="#333437" />
<g transform="translate(1461.24,0) scale(0.95,1) translate(-1461.24,0)">
<text x="1461.24" y="834.2" font-size="20" fill="#6f9bf6" font-weight="normal" text-anchor="middle" letter-spacing="0.2" >FOLEY</text>
</g>
<rect x="1406.24" y="852" width="110" height="6" rx="3" fill="#2a2b2e" />
<rect x="1460.24" y="851" width="2" height="7" rx="0" fill="#6f9bf6" />
<rect x="1406.24" y="880" width="37" height="37" rx="3" fill="#2b2c2f" />
<rect x="1406.24" y="922" width="37" height="37" rx="3" fill="#2b2c2f" />
<text x="1424.74" y="906.5" font-size="20" fill="#6a6b6f" font-weight="normal" text-anchor="middle" >S</text>
<text x="1424.74" y="948.5" font-size="20" fill="#6a6b6f" font-weight="normal" text-anchor="middle" >M</text>
<rect x="1468.24" y="880" width="6" height="226" rx="3" fill="#2a2b2e" />
<circle cx="1471.24" cy="934.5" r="13" fill="#6f9bf6" filter="url(#shs)"/>
<rect x="1498.24" y="880" width="8" height="226" rx="0" fill="#2a2b2e" />
<rect x="1508.24" y="880" width="8" height="226" rx="0" fill="#2a2b2e" />
<rect x="1498.24" y="910" width="8" height="2" rx="0" fill="#6f9bf6" />
<rect x="1498.24" y="934" width="8" height="172" rx="0" fill="#6f9bf6" />
<rect x="1508.24" y="914" width="8" height="2" rx="0" fill="#6f9bf6" />
<rect x="1508.24" y="918" width="8" height="188" rx="0" fill="#6f9bf6" />
<circle cx="1425.24" cy="990.7" r="19" fill="#28292c" />
<rect x="1424.24" y="971.7" width="2" height="16" rx="0" fill="#c4c4c4" />
<text x="1425.24" y="1032" font-size="20" fill="#88898d" font-weight="normal" text-anchor="middle" letter-spacing="0.7" >Delay</text>
<circle cx="1425.24" cy="1065" r="19" fill="#28292c" />
<rect x="1424.24" y="1046" width="2" height="16" rx="0" fill="#c4c4c4" />
<text x="1425.24" y="1106" font-size="20" fill="#88898d" font-weight="normal" text-anchor="middle" letter-spacing="0.7" >Rev A</text>
<rect x="1442.24" y="1128" width="38" height="38" rx="3" fill="#232427" />
<rect x="1451.74" y="1137.5" width="19" height="19.5" rx="2.5" fill="none" stroke="#66676b" stroke-width="2"/>
<rect x="1454.74" y="1138.5" width="5.2" height="11.5" rx="0" fill="#58595d" />
<rect x="1462.54" y="1138.5" width="5.2" height="11.5" rx="0" fill="#58595d" />
<rect x="1456.64" y="1150.0" width="1.5" height="6" rx="0" fill="#58595d" />
<rect x="1464.44" y="1150.0" width="1.5" height="6" rx="0" fill="#58595d" />
<rect x="1538" y="800" width="148" height="374" rx="1.5" fill="#333437" />
<g transform="translate(1613.27,0) scale(0.955,1) translate(-1613.27,0)">
<text x="1613.27" y="834.2" font-size="20" fill="#6ed57b" font-weight="normal" text-anchor="middle" letter-spacing="0.2" >CRASH</text>
</g>
<rect x="1558.27" y="852" width="110" height="6" rx="3" fill="#2a2b2e" />
<rect x="1612.27" y="851" width="2" height="7" rx="0" fill="#6ed57b" />
<rect x="1558.27" y="880" width="37" height="37" rx="3" fill="#2b2c2f" />
<rect x="1558.27" y="922" width="37" height="37" rx="3" fill="#2b2c2f" />
<text x="1576.77" y="906.5" font-size="20" fill="#6a6b6f" font-weight="normal" text-anchor="middle" >S</text>
<text x="1576.77" y="948.5" font-size="20" fill="#6a6b6f" font-weight="normal" text-anchor="middle" >M</text>
<rect x="1620.27" y="880" width="6" height="226" rx="3" fill="#2a2b2e" />
<circle cx="1623.27" cy="934.5" r="13" fill="#6ed57b" filter="url(#shs)"/>
<rect x="1650.27" y="880" width="8" height="226" rx="0" fill="#2a2b2e" />
<rect x="1660.27" y="880" width="8" height="226" rx="0" fill="#2a2b2e" />
<rect x="1650.27" y="910" width="8" height="2" rx="0" fill="#6ed57b" />
<rect x="1650.27" y="934" width="8" height="172" rx="0" fill="#6ed57b" />
<rect x="1660.27" y="914" width="8" height="2" rx="0" fill="#6ed57b" />
<rect x="1660.27" y="918" width="8" height="188" rx="0" fill="#6ed57b" />
<circle cx="1577.27" cy="990.7" r="19" fill="#28292c" />
<rect x="1576.27" y="971.7" width="2" height="16" rx="0" fill="#c4c4c4" />
<text x="1577.27" y="1032" font-size="20" fill="#88898d" font-weight="normal" text-anchor="middle" letter-spacing="0.7" >Delay</text>
<circle cx="1577.27" cy="1065" r="19" fill="#28292c" />
<rect x="1576.27" y="1046" width="2" height="16" rx="0" fill="#c4c4c4" />
<text x="1577.27" y="1106" font-size="20" fill="#88898d" font-weight="normal" text-anchor="middle" letter-spacing="0.7" >Rev A</text>
<rect x="1594.27" y="1128" width="38" height="38" rx="3" fill="#232427" />
<rect x="1603.77" y="1137.5" width="19" height="19.5" rx="2.5" fill="none" stroke="#66676b" stroke-width="2"/>
<rect x="1606.77" y="1138.5" width="5.2" height="11.5" rx="0" fill="#58595d" />
<rect x="1614.57" y="1138.5" width="5.2" height="11.5" rx="0" fill="#58595d" />
<rect x="1608.67" y="1150.0" width="1.5" height="6" rx="0" fill="#58595d" />
<rect x="1616.47" y="1150.0" width="1.5" height="6" rx="0" fill="#58595d" />
<rect x="1690" y="800" width="150" height="374" rx="1.5" fill="#333437" />
<g transform="translate(1765.3,0) scale(0.96,1) translate(-1765.3,0)">
<text x="1765.3" y="834.2" font-size="20" fill="#6ed57b" font-weight="normal" text-anchor="middle" letter-spacing="0.2" >RIDE</text>
</g>
<rect x="1710.3" y="852" width="110" height="6" rx="3" fill="#2a2b2e" />
<rect x="1764.3" y="851" width="2" height="7" rx="0" fill="#6ed57b" />
<rect x="1710.3" y="880" width="37" height="37" rx="3" fill="#2b2c2f" />
<rect x="1710.3" y="922" width="37" height="37" rx="3" fill="#2b2c2f" />
<text x="1728.8" y="906.5" font-size="20" fill="#6a6b6f" font-weight="normal" text-anchor="middle" >S</text>
<text x="1728.8" y="948.5" font-size="20" fill="#6a6b6f" font-weight="normal" text-anchor="middle" >M</text>
<rect x="1772.3" y="880" width="6" height="226" rx="3" fill="#2a2b2e" />
<circle cx="1775.3" cy="934.5" r="13" fill="#6ed57b" filter="url(#shs)"/>
<rect x="1802.3" y="880" width="8" height="226" rx="0" fill="#2a2b2e" />
<rect x="1812.3" y="880" width="8" height="226" rx="0" fill="#2a2b2e" />
<rect x="1802.3" y="910" width="8" height="2" rx="0" fill="#6ed57b" />
<rect x="1802.3" y="934" width="8" height="172" rx="0" fill="#6ed57b" />
<rect x="1812.3" y="914" width="8" height="2" rx="0" fill="#6ed57b" />
<rect x="1812.3" y="918" width="8" height="188" rx="0" fill="#6ed57b" />
<circle cx="1729.3" cy="990.7" r="19" fill="#28292c" />
<rect x="1728.3" y="971.7" width="2" height="16" rx="0" fill="#c4c4c4" />
<text x="1729.3" y="1032" font-size="20" fill="#88898d" font-weight="normal" text-anchor="middle" letter-spacing="0.7" >Delay</text>
<circle cx="1729.3" cy="1065" r="19" fill="#28292c" />
<rect x="1728.3" y="1046" width="2" height="16" rx="0" fill="#c4c4c4" />
<text x="1729.3" y="1106" font-size="20" fill="#88898d" font-weight="normal" text-anchor="middle" letter-spacing="0.7" >Rev A</text>
<rect x="1746.3" y="1128" width="38" height="38" rx="3" fill="#232427" />
<rect x="1755.8" y="1137.5" width="19" height="19.5" rx="2.5" fill="none" stroke="#66676b" stroke-width="2"/>
<rect x="1758.8" y="1138.5" width="5.2" height="11.5" rx="0" fill="#58595d" />
<rect x="1766.6" y="1138.5" width="5.2" height="11.5" rx="0" fill="#58595d" />
<rect x="1760.7" y="1150.0" width="1.5" height="6" rx="0" fill="#58595d" />
<rect x="1768.5" y="1150.0" width="1.5" height="6" rx="0" fill="#58595d" />
<rect x="16" y="1182" width="74" height="52" rx="3" fill="#333437" />
<rect x="94" y="1182" width="72" height="52" rx="3" fill="#333437" />
<rect x="170" y="1182" width="72" height="52" rx="3" fill="#333437" />
<rect x="246" y="1182" width="72" height="52" rx="3" fill="#333437" />
<rect x="322" y="1182" width="148" height="52" rx="3" fill="#333437" />
<path d="M48,1199 L64,1208.5 L48,1218 Z" fill="#6ad36a"/>
<circle cx="130" cy="1208" r="10" fill="#e85656" />
<rect x="196" y="1200" width="16" height="16" rx="0" fill="#7c7c7e" />
<path d="M276.5,1207 v-4 a5.5,5.5 0 0 1 11,0 v4" fill="none" stroke="#7c7c7e" stroke-width="2.4"/>
<rect x="274" y="1206" width="16" height="12" rx="0" fill="#7c7c7e" />
<g transform="translate(396,0) scale(0.955,1) translate(-396,0)">
<text x="396" y="1216" font-size="20" fill="#7e7f83" font-weight="normal" text-anchor="middle" letter-spacing="0.3" >MIDI EXP.</text>
</g>
<rect x="484" y="1182" width="40" height="10" rx="0" fill="#f25f5f" />
<rect x="484" y="1194" width="40" height="40" rx="0" fill="#f25f5f" />
<text x="504" y="1222" font-size="22.5" fill="#1c1c1c" font-weight="normal" text-anchor="middle" >1</text>
<rect x="526" y="1182" width="40" height="10" rx="0" fill="#2f3033" />
<rect x="526" y="1194" width="40" height="40" rx="0" fill="#333437" />
<text x="546" y="1222" font-size="22.5" fill="#86878b" font-weight="normal" text-anchor="middle" >2</text>
<rect x="568" y="1182" width="40" height="10" rx="0" fill="#2f3033" />
<rect x="568" y="1194" width="40" height="40" rx="0" fill="#333437" />
<text x="588" y="1222" font-size="22.5" fill="#86878b" font-weight="normal" text-anchor="middle" >3</text>
<rect x="610" y="1182" width="40" height="10" rx="0" fill="#2f3033" />
<rect x="610" y="1194" width="40" height="40" rx="0" fill="#333437" />
<text x="630" y="1222" font-size="22.5" fill="#86878b" font-weight="normal" text-anchor="middle" >4</text>
<rect x="654" y="1182" width="40" height="10" rx="0" fill="#2f3033" />
<rect x="654" y="1194" width="40" height="40" rx="0" fill="#f25f5f" />
<text x="674" y="1222" font-size="22.5" fill="#1c1c1c" font-weight="normal" text-anchor="middle" >5</text>
<rect x="696" y="1182" width="40" height="10" rx="0" fill="#2f3033" />
<rect x="696" y="1194" width="40" height="40" rx="0" fill="#333437" />
<text x="716" y="1222" font-size="22.5" fill="#86878b" font-weight="normal" text-anchor="middle" >6</text>
<rect x="738" y="1182" width="40" height="10" rx="0" fill="#2f3033" />
<rect x="738" y="1194" width="40" height="40" rx="0" fill="#333437" />
<text x="758" y="1222" font-size="22.5" fill="#86878b" font-weight="normal" text-anchor="middle" >7</text>
<rect x="780" y="1182" width="40" height="10" rx="0" fill="#2f3033" />
<rect x="780" y="1194" width="40" height="40" rx="0" fill="#333437" />
<text x="800" y="1222" font-size="22.5" fill="#86878b" font-weight="normal" text-anchor="middle" >8</text>
<rect x="824" y="1182" width="40" height="10" rx="0" fill="#2f3033" />
<rect x="824" y="1194" width="40" height="40" rx="0" fill="#f25f5f" />
<text x="844" y="1222" font-size="22.5" fill="#1c1c1c" font-weight="normal" text-anchor="middle" >9</text>
<rect x="866" y="1182" width="40" height="10" rx="0" fill="#2f3033" />
<rect x="866" y="1194" width="40" height="40" rx="0" fill="#333437" />
<text x="886" y="1222" font-size="22.5" fill="#86878b" font-weight="normal" text-anchor="middle" >10</text>
<rect x="908" y="1182" width="40" height="10" rx="0" fill="#2f3033" />
<rect x="908" y="1194" width="40" height="40" rx="0" fill="#333437" />
<text x="928" y="1222" font-size="22.5" fill="#86878b" font-weight="normal" text-anchor="middle" >11</text>
<rect x="950" y="1182" width="40" height="10" rx="0" fill="#2f3033" />
<rect x="950" y="1194" width="40" height="40" rx="0" fill="#333437" />
<text x="970" y="1222" font-size="22.5" fill="#86878b" font-weight="normal" text-anchor="middle" >12</text>
<rect x="994" y="1182" width="40" height="10" rx="0" fill="#2f3033" />
<rect x="994" y="1194" width="40" height="40" rx="0" fill="#f25f5f" />
<text x="1014" y="1222" font-size="22.5" fill="#1c1c1c" font-weight="normal" text-anchor="middle" >13</text>
<rect x="1036" y="1182" width="40" height="10" rx="0" fill="#2f3033" />
<rect x="1036" y="1194" width="40" height="40" rx="0" fill="#333437" />
<text x="1056" y="1222" font-size="22.5" fill="#86878b" font-weight="normal" text-anchor="middle" >14</text>
<rect x="1078" y="1182" width="40" height="10" rx="0" fill="#2f3033" />
<rect x="1078" y="1194" width="40" height="40" rx="0" fill="#333437" />
<text x="1098" y="1222" font-size="22.5" fill="#86878b" font-weight="normal" text-anchor="middle" >15</text>
<rect x="1120" y="1182" width="40" height="10" rx="0" fill="#2f3033" />
<rect x="1120" y="1194" width="40" height="40" rx="0" fill="#333437" />
<text x="1140" y="1222" font-size="22.5" fill="#86878b" font-weight="normal" text-anchor="middle" >16</text>
<rect x="1164" y="1182" width="40" height="10" rx="0" fill="#2f3033" />
<rect x="1164" y="1194" width="40" height="40" rx="0" fill="#f25f5f" />
<text x="1184" y="1222" font-size="22.5" fill="#1c1c1c" font-weight="normal" text-anchor="middle" >17</text>
<rect x="1206" y="1182" width="40" height="10" rx="0" fill="#2f3033" />
<rect x="1206" y="1194" width="40" height="40" rx="0" fill="#333437" />
<text x="1226" y="1222" font-size="22.5" fill="#86878b" font-weight="normal" text-anchor="middle" >18</text>
<rect x="1248" y="1182" width="40" height="10" rx="0" fill="#2f3033" />
<rect x="1248" y="1194" width="40" height="40" rx="0" fill="#333437" />
<text x="1268" y="1222" font-size="22.5" fill="#86878b" font-weight="normal" text-anchor="middle" >19</text>
<rect x="1290" y="1182" width="40" height="10" rx="0" fill="#2f3033" />
<rect x="1290" y="1194" width="40" height="40" rx="0" fill="#333437" />
<text x="1310" y="1222" font-size="22.5" fill="#86878b" font-weight="normal" text-anchor="middle" >20</text>
<rect x="1334" y="1182" width="40" height="10" rx="0" fill="#2f3033" />
<rect x="1334" y="1194" width="40" height="40" rx="0" fill="#f25f5f" />
<text x="1354" y="1222" font-size="22.5" fill="#1c1c1c" font-weight="normal" text-anchor="middle" >21</text>
<rect x="1376" y="1182" width="40" height="10" rx="0" fill="#2f3033" />
<rect x="1376" y="1194" width="40" height="40" rx="0" fill="#333437" />
<text x="1396" y="1222" font-size="22.5" fill="#86878b" font-weight="normal" text-anchor="middle" >22</text>
<rect x="1418" y="1182" width="40" height="10" rx="0" fill="#2f3033" />
<rect x="1418" y="1194" width="40" height="40" rx="0" fill="#333437" />
<text x="1438" y="1222" font-size="22.5" fill="#86878b" font-weight="normal" text-anchor="middle" >23</text>
<rect x="1460" y="1182" width="40" height="10" rx="0" fill="#2f3033" />
<rect x="1460" y="1194" width="40" height="40" rx="0" fill="#333437" />
<text x="1480" y="1222" font-size="22.5" fill="#86878b" font-weight="normal" text-anchor="middle" >24</text>
<rect x="1504" y="1182" width="40" height="10" rx="0" fill="#2f3033" />
<rect x="1504" y="1194" width="40" height="40" rx="0" fill="#f25f5f" />
<text x="1524" y="1222" font-size="22.5" fill="#1c1c1c" font-weight="normal" text-anchor="middle" >25</text>
<rect x="1546" y="1182" width="40" height="10" rx="0" fill="#2f3033" />
<rect x="1546" y="1194" width="40" height="40" rx="0" fill="#333437" />
<text x="1566" y="1222" font-size="22.5" fill="#86878b" font-weight="normal" text-anchor="middle" >26</text>
<rect x="1588" y="1182" width="40" height="10" rx="0" fill="#2f3033" />
<rect x="1588" y="1194" width="40" height="40" rx="0" fill="#333437" />
<text x="1608" y="1222" font-size="22.5" fill="#86878b" font-weight="normal" text-anchor="middle" >27</text>
<rect x="1630" y="1182" width="40" height="10" rx="0" fill="#2f3033" />
<rect x="1630" y="1194" width="40" height="40" rx="0" fill="#333437" />
<text x="1650" y="1222" font-size="22.5" fill="#86878b" font-weight="normal" text-anchor="middle" >28</text>
<rect x="1674" y="1182" width="40" height="10" rx="0" fill="#2f3033" />
<rect x="1674" y="1194" width="40" height="40" rx="0" fill="#f25f5f" />
<text x="1694" y="1222" font-size="22.5" fill="#1c1c1c" font-weight="normal" text-anchor="middle" >29</text>
<rect x="1716" y="1182" width="40" height="10" rx="0" fill="#2f3033" />
<rect x="1716" y="1194" width="40" height="40" rx="0" fill="#333437" />
<text x="1736" y="1222" font-size="22.5" fill="#86878b" font-weight="normal" text-anchor="middle" >30</text>
<rect x="1758" y="1182" width="40" height="10" rx="0" fill="#2f3033" />
<rect x="1758" y="1194" width="40" height="40" rx="0" fill="#333437" />
<text x="1778" y="1222" font-size="22.5" fill="#86878b" font-weight="normal" text-anchor="middle" >31</text>
<rect x="1800" y="1182" width="40" height="10" rx="0" fill="#2f3033" />
<rect x="1800" y="1194" width="40" height="40" rx="0" fill="#333437" />
<text x="1820" y="1222" font-size="22.5" fill="#86878b" font-weight="normal" text-anchor="middle" >32</text>
<g filter="url(#rsh)"><path d="M149,0 L262,0 L0,262 L0,149 Z" fill="#ec5b5b"/></g>
<text x="0" y="0" font-size="46" font-weight="bold" fill="#ffffff" text-anchor="middle" letter-spacing="1" transform="translate(112,118) rotate(-45)">SALE</text>
</svg></body></html>
